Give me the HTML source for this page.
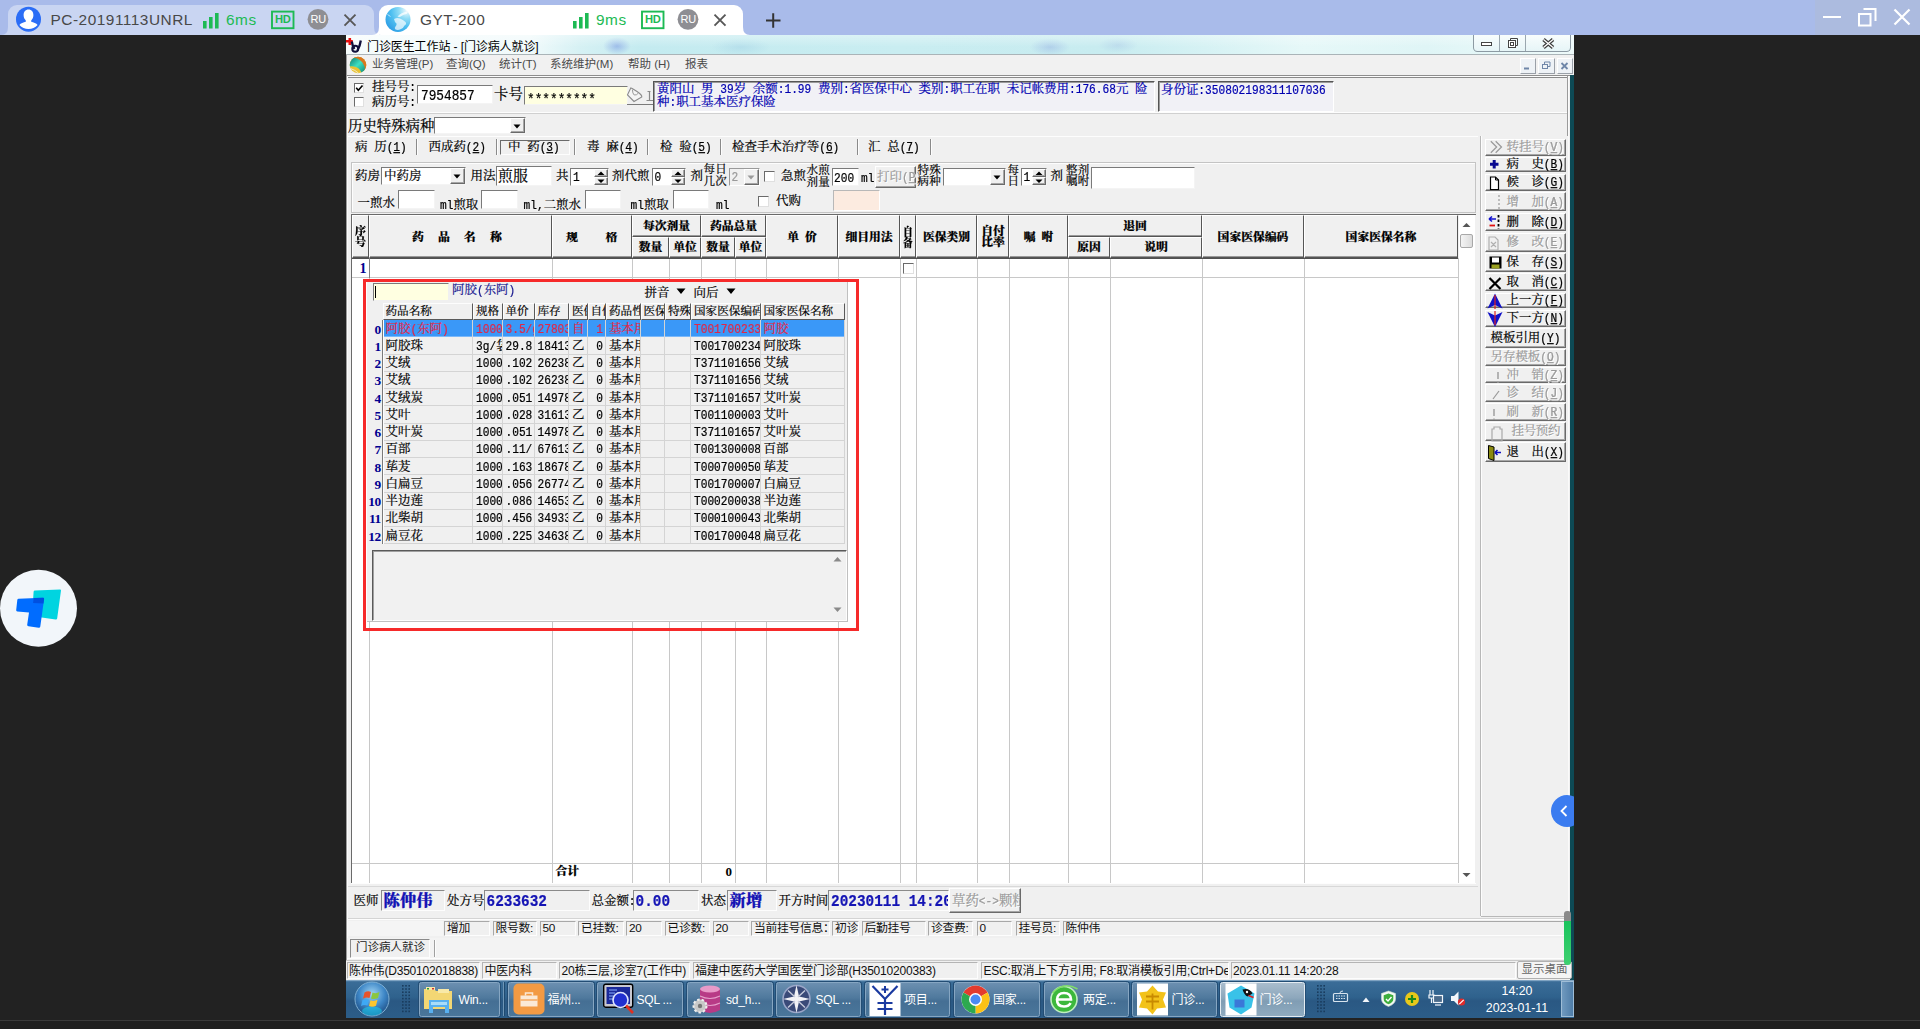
<!DOCTYPE html>
<html lang="zh-CN"><head><meta charset="utf-8"><title>GYT-200</title>
<style>
html,body{margin:0;padding:0;background:#222;}
body{width:1920px;height:1029px;overflow:hidden;position:relative;font-family:"Liberation Sans","Noto Sans CJK SC",sans-serif;}
.a{position:absolute;box-sizing:border-box;}
.t{white-space:nowrap;line-height:1;}
.s{font-family:"Liberation Serif","Noto Serif CJK SC",serif;font-size:11.5px;color:#000;font-weight:400;-webkit-text-stroke:0.2px currentColor;}
.s13{font-size:13.4px;}
.s15{font-size:14.4px;}
.s16{font-size:15.4px;}
.y{font-family:"Liberation Sans","Noto Sans CJK SC",sans-serif;font-size:11.5px;color:#222;}
.b{font-weight:900;}
.b .m{font-weight:bold;}
.blue{color:#0000b0;}
.gray{color:#9a9a9a;}
.sunk{border:1px solid;border-color:#7a7a7a #f4f4f4 #f4f4f4 #7a7a7a;background:#fff;}
.sunk2{border:1px solid;border-color:#9a9a9a #fff #fff #9a9a9a;background:#f0f0f0;}
.btn{border:1px solid;border-color:#fff #6a6a6a #6a6a6a #fff;background:#f0f0f0;box-shadow:inset -1px -1px 0 #a6a6a6;}
.hd{background:#f0f0f0;border:1px solid;border-color:#fff #555 #555 #fff;box-shadow:inset 0 -1px 0 #999;}
.c{text-align:center;}
.m{font-family:"Liberation Mono",monospace;font-size:.8333em;display:inline-block;transform:scaleY(1.2);transform-origin:0 77%;white-space:pre;}
u .m{text-decoration:underline;}
.f13 .m{font-size:.8975em;}
.f15 .m{font-size:.888em;}
.f18 .m{font-size:.877em;}
</style></head>
<body>
<div class="a " style="left:0px;top:0px;width:1920px;height:35px;background:#a9bbea"></div>
<div class="a " style="left:1815px;top:0px;width:105px;height:35px;background:#acbbdf"></div>
<div class="a " style="left:8px;top:5px;width:366px;height:30px;background:#c9d5f2;border-radius:9px 9px 0 0"></div>
<div class="a " style="left:379px;top:5px;width:364px;height:30px;background:#fff;border-radius:9px 9px 0 0"></div>
<svg class="a" style="left:0;top:0" width="1920" height="35" viewBox="0 0 1920 35"><path d="M1 35 Q8 35 8 27 L8 35 Z M381 35 Q374 35 374 27 L374 35 Z" fill="#c9d5f2"/><path d="M372 35 Q379 35 379 27 L379 35 Z M750 35 Q743 35 743 27 L743 35 Z" fill="#fff"/><circle cx="28.5" cy="19.2" r="12.5" fill="#2b6df6"/><path d="M28.5 9.5c3.1 0 4.9 2.4 4.9 5.6 0 2.3-.9 4.3-2.2 5.3v1.3c2.2.5 5.2 1.6 6.4 3.2a12.3 12.3 0 0 1-18.2 0c1.2-1.6 4.2-2.7 6.4-3.2v-1.3c-1.3-1-2.2-3-2.2-5.3 0-3.2 1.8-5.6 4.9-5.6z" fill="#fff"/><rect x="203" y="21" width="3.6" height="7.5" fill="#1dba54"/><rect x="209" y="17" width="3.6" height="11.5" fill="#1dba54"/><rect x="215" y="13" width="3.6" height="15.5" fill="#1dba54"/><rect x="272" y="11.6" width="21.5" height="16.6" fill="none" stroke="#1dba54" stroke-width="1.9"/><circle cx="318" cy="19.3" r="10.4" fill="#8e8e93"/><path d="M344.5 14.6 L355.5 25.6 M355.5 14.6 L344.5 25.6" stroke="#585858" stroke-width="1.9" fill="none"/><defs><radialGradient id="gl" cx="0.85" cy="0.15" r="1.05"><stop offset="0" stop-color="#eef9fd"/><stop offset="0.3" stop-color="#8fdcf6"/><stop offset="0.6" stop-color="#4ebff0"/><stop offset="1" stop-color="#2a9ae4"/></radialGradient></defs><circle cx="398" cy="19.5" r="12.5" fill="url(#gl)"/><path d="M397.5 16.5q3.5-4 9.5-5q1.5 1-0.5 2.5q-3 .5-5 2q-2 1.5-4 .5z" fill="#fff" opacity="0.75"/><path d="M394 19q3-1.5 6-.5q3 1 5.5 3.5q1.5 2-1 3.5q-1 2.5-3.5 3.5q-3 1.5-5.5 .5q-1.5-1.5 0-3q1.5-1.5 1-3q-2-1.5-2.5-4.5z" fill="#fff" opacity="0.7"/><path d="M387.5 14.5l3 2" stroke="#fff" stroke-width=".8" opacity=".8"/><rect x="573" y="21" width="3.6" height="7.5" fill="#1dba54"/><rect x="579" y="17" width="3.6" height="11.5" fill="#1dba54"/><rect x="585" y="13" width="3.6" height="15.5" fill="#1dba54"/><rect x="642" y="11.6" width="21.5" height="16.6" fill="none" stroke="#1dba54" stroke-width="1.9"/><circle cx="688" cy="19.3" r="10.4" fill="#8e8e93"/><path d="M714.5 14.6 L725.5 25.6 M725.5 14.6 L714.5 25.6" stroke="#585858" stroke-width="1.9" fill="none"/><path d="M766 20.5 H780.5 M773.2 13.2 V27.8" stroke="#333" stroke-width="2" fill="none"/><path d="M1823 17 H1841" stroke="#fff" stroke-width="2"/><rect x="1859" y="14" width="11.5" height="11.5" fill="none" stroke="#fff" stroke-width="2"/><path d="M1863.5 9 H1875.5 V21" fill="none" stroke="#fff" stroke-width="2"/><path d="M1894.5 9.5 L1909.5 24.5 M1909.5 9.5 L1894.5 24.5" stroke="#fff" stroke-width="2.2" fill="none"/></svg>
<span class="a t y" style="left:50.5px;top:12.4px;font-size:15.4px;color:#484848;letter-spacing:0.52px">PC-20191113UNRL</span>
<span class="a t y" style="left:226px;top:12.4px;font-size:15.4px;color:#1dba54;letter-spacing:0.5px">6ms</span>
<span class="a t y b" style="left:275px;top:14.2px;font-size:11.2px;color:#1dba54;letter-spacing:-0.3px">HD</span>
<span class="a t y" style="left:310.6px;top:14px;font-size:11px;color:#fff;letter-spacing:-0.3px">RU</span>
<span class="a t y" style="left:420px;top:12.4px;font-size:15.4px;color:#484848;letter-spacing:0.52px">GYT-200</span>
<span class="a t y" style="left:596px;top:12.4px;font-size:15.4px;color:#1dba54;letter-spacing:0.5px">9ms</span>
<span class="a t y b" style="left:645px;top:14.2px;font-size:11.2px;color:#1dba54;letter-spacing:-0.3px">HD</span>
<span class="a t y" style="left:680.6px;top:14px;font-size:11px;color:#fff;letter-spacing:-0.3px">RU</span>
<svg class="a" style="left:0;top:565px" width="84" height="88" viewBox="0 0 84 88"><circle cx="38.5" cy="43.3" r="38.5" fill="#f2f6fa"/><path d="M35 25.5 L60 24.4 Q61.2 24.4 61 25.6 L57.2 53.3 Q57 54.7 55.6 54.5 L33 51.2 Q32 51 32.1 50 L33.6 26.8 Q33.7 25.6 35 25.5 Z" fill="#00d4e0"/><path d="M18.5 33.7 L43 32.7 Q44.3 32.7 44.1 34 L40.3 61.5 Q40 63 38.7 62.8 L28.5 61.3 Q27 61 27.2 59.7 L29 47.5 L17.3 46.5 Q16 46.3 16.2 45 L17.3 35 Q17.5 33.7 18.5 33.7 Z" fill="#006cff"/><path d="M33.7 33.1 L43 32.7 Q44.3 32.7 44.1 34 L43.5 38.5 L33.1 38 Z" fill="#0050e0"/></svg>
<div class="a " style="left:1551px;top:795px;width:23px;height:32px;overflow:hidden;z-index:50"><div class="a" style="left:0;top:0;width:32px;height:32px;border-radius:16px;background:#3b7cf0"></div><svg class="a" style="left:8px;top:9px" width="10" height="14" viewBox="0 0 10 14"><path d="M7.5 2 L2.5 7 L7.5 12" stroke="#fff" stroke-width="1.8" fill="none"/></svg></div>
<div class="a " style="left:1564px;top:911px;width:7px;height:12px;background:#8a8a8a;border-radius:3px 3px 0 0;z-index:50"></div>
<div class="a " style="left:1564px;top:921px;width:7px;height:44px;background:linear-gradient(#19c35c,#3fd070);border-radius:0 0 3px 3px;z-index:50"></div>
<div class="a " style="left:346px;top:35px;width:1228px;height:983px;background:#f0f0f0"></div>
<div class="a " style="left:346px;top:35px;width:1228px;height:20px;background:radial-gradient(14px 9px at 271px 11px,rgba(110,140,225,.5),rgba(110,140,225,0)),radial-gradient(20px 9px at 704px 12px,rgba(140,165,225,.4),rgba(140,165,225,0)),radial-gradient(20px 8px at 772px 10px,rgba(150,180,225,.3),rgba(150,180,225,0)),radial-gradient(30px 9px at 395px 12px,rgba(150,200,225,.35),rgba(150,200,225,0)),linear-gradient(90deg,#f6fcfc 0,#f1fafb 15%,#d6f1f4 19%,#c4ebf0 24%,#c9edf1 45%,#c8ecf0 62%,#d6f2f4 70%,#e6f8f8 78%,#dff5f6 88%,#eefafa 100%);"></div>
<div class="a " style="left:346px;top:35px;width:1228px;height:20px;background:linear-gradient(180deg,rgba(255,255,255,.35),rgba(255,255,255,0) 60%);"></div>
<div class="a " style="left:346px;top:54px;width:1228px;height:1px;background:#aab4b8"></div>
<svg class="a" style="left:346px;top:36px" width="18" height="18" viewBox="0 0 18 18"><path d="M0 5.3 H6.8 M3.8 2 V9" stroke="#e81010" stroke-width="2.6"/><path d="M5.8 5.5 Q6.5 10.5 8.5 13 M14.8 4.5 Q14 10 11.5 14.5" stroke="#10103a" stroke-width="2.3" fill="none"/><circle cx="9.2" cy="12.7" r="3" fill="none" stroke="#10103a" stroke-width="1.9"/></svg>
<span class="a t y" style="left:367px;top:40.5px;font-size:12px;color:#000;letter-spacing:-0.1px">门诊医生工作站 - [门诊病人就诊]</span>
<div class="a " style="left:1472.5px;top:35px;width:98.5px;height:17px;background:linear-gradient(#f8fdfd,#e6f5f7);border:1px solid #8c9aa3;border-top:none;border-radius:0 0 4.5px 4.5px"></div>
<div class="a " style="left:1499px;top:35px;width:1px;height:16px;background:#9aa7af"></div>
<div class="a " style="left:1525px;top:35px;width:1px;height:16px;background:#9aa7af"></div>
<svg class="a" style="left:1472px;top:35px" width="95" height="17" viewBox="0 0 95 17"><rect x="9.5" y="7.5" width="10" height="3" fill="#fff" stroke="#444" stroke-width="1"/><rect x="36.5" y="5.5" width="7" height="7" fill="#fff" stroke="#444" stroke-width="1"/><rect x="38.5" y="7.5" width="3" height="3" fill="#fff" stroke="#444"/><path d="M38.5 5 V3.5 H45.5 V10.5 H44" fill="none" stroke="#444"/><path d="M71.5 4.5 L81 12.5 M81 4.5 L71.5 12.5" stroke="#3c3c3c" stroke-width="3.6"/><path d="M71.5 4.5 L81 12.5 M81 4.5 L71.5 12.5" stroke="#fff" stroke-width="1.3"/></svg>
<div class="a " style="left:346px;top:55px;width:1228px;height:20px;background:#f1f1f1"></div>
<div class="a " style="left:346px;top:75px;width:1224px;height:1px;background:#8e8e8e"></div>
<div class="a " style="left:346px;top:76px;width:1224px;height:1px;background:#fdfdfd"></div>
<svg class="a" style="left:349px;top:56.3px" width="18" height="18" viewBox="0 0 18 18"><defs><linearGradient id="tl" x1="0" y1="0" x2="1" y2="1"><stop offset="0" stop-color="#0c7a70"/><stop offset=".5" stop-color="#3fe0c0"/><stop offset="1" stop-color="#0c8478"/></linearGradient><clipPath id="mc"><circle cx="9" cy="9" r="8.3"/></clipPath></defs><g clip-path="url(#mc)"><rect width="18" height="18" fill="#e8c234"/><path d="M0 0 H18 V18 Z" fill="#d8761e"/><path d="M1.5 12.5 Q6 14 9.5 17" stroke="#f6ecc0" stroke-width="1" fill="none"/><path d="M0 5.5 Q2 2 5 1.8 Q10 2.5 13.5 6.5 Q16.5 10.5 15.8 14.5 L12.8 17.5 Q11.5 13 7.5 11.2 Q3.5 9.5 0 10.5 Z" fill="url(#tl)"/></g></svg>
<span class="a t y" style="left:372px;top:59px;font-size:11.5px;color:#4a4a4a;">业务管理(P)</span>
<span class="a t y" style="left:446px;top:59px;font-size:11.5px;color:#4a4a4a;">查询(Q)</span>
<span class="a t y" style="left:499px;top:59px;font-size:11.5px;color:#4a4a4a;">统计(T)</span>
<span class="a t y" style="left:550px;top:59px;font-size:11.5px;color:#4a4a4a;">系统维护(M)</span>
<span class="a t y" style="left:628px;top:59px;font-size:11.5px;color:#4a4a4a;">帮助 (H)</span>
<span class="a t y" style="left:685px;top:59px;font-size:11.5px;color:#4a4a4a;">报表</span>
<div class="a " style="left:1519.5px;top:57.5px;width:16.5px;height:16px;background:#eef2f6;border:1px solid;border-color:#fff #9aa0a8 #9aa0a8 #fff"></div>
<div class="a " style="left:1538px;top:57.5px;width:16.5px;height:16px;background:#eef2f6;border:1px solid;border-color:#fff #9aa0a8 #9aa0a8 #fff"></div>
<div class="a " style="left:1556.5px;top:57.5px;width:16.5px;height:16px;background:#eef2f6;border:1px solid;border-color:#fff #9aa0a8 #9aa0a8 #fff"></div>
<svg class="a" style="left:1519px;top:58px" width="54" height="16" viewBox="0 0 54 16"><path d="M5 10.5 H10" stroke="#6f86a8" stroke-width="2"/><rect x="23.5" y="6.5" width="5" height="4" fill="none" stroke="#6f86a8"/><path d="M25.5 6 V4 H31 V8.5 H29" fill="none" stroke="#6f86a8"/><path d="M42.5 5 L48.5 11 M48.5 5 L42.5 11" stroke="#6f86a8" stroke-width="1.8"/></svg>
<div class="a " style="left:1569.5px;top:75px;width:4.5px;height:905px;background:#0e4a55"></div>
<div class="a " style="left:1568px;top:76px;width:1px;height:904px;background:#fafafa"></div>
<div class="a " style="left:1567px;top:76px;width:1px;height:904px;background:#9a9a9a"></div>
<div class="a " style="left:346px;top:55px;width:1px;height:925px;background:#9c9c9c"></div>
<div class="a " style="left:347px;top:76px;width:1px;height:904px;background:#fafafa"></div>
<div class="a " style="left:348px;top:77px;width:1219px;height:1px;background:#8a8a8a"></div>
<div class="a " style="left:348px;top:112px;width:1219px;height:1px;background:#fdfdfd"></div>
<div class="a " style="left:348px;top:113px;width:1219px;height:1px;background:#d0d0d0"></div>
<div class="a " style="left:354px;top:82.5px;width:10px;height:10px;background:#fff;border:1px solid;border-color:#6a6a6a #e0e0e0 #e0e0e0 #6a6a6a"></div>
<svg class="a" style="left:355px;top:83.5px" width="9" height="9" viewBox="0 0 9 9"><path d="M1.2 3.8 L3.3 6.2 L7.5 1.5" stroke="#000" stroke-width="1.6" fill="none"/></svg>
<div class="a " style="left:354px;top:97px;width:10px;height:10px;background:#fff;border:1px solid;border-color:#6a6a6a #e0e0e0 #e0e0e0 #6a6a6a"></div>
<span class="a t s f13" style="left:372px;top:81px;font-size:12.460px">挂号号<span class="m">:</span></span>
<span class="a t s f13" style="left:372px;top:95.5px;font-size:12.460px">病历号<span class="m">:</span></span>
<div class="a sunk" style="left:417px;top:85px;width:76px;height:19px;"></div>
<span class="a t s f15" style="left:421px;top:88px;font-size:14.4px"><span class="m">7954857</span></span>
<span class="a t s f15" style="left:494px;top:87px;font-size:14.4px">卡号</span>
<div class="a sunk" style="left:524px;top:86px;width:104px;height:19px;background:#ffffe1"></div>
<span class="a t s f15" style="left:527px;top:91.5px;font-size:14.4px;"><span class="m">*********</span></span>
<div class="a " style="left:627px;top:86px;width:26px;height:19px;border-bottom:1px solid #7a7a7a;"></div>
<svg class="a" style="left:626px;top:87px" width="27" height="17" viewBox="0 0 27 17"><path d="M4.8 1 L1.5 7.8 L8 14.5 L15.8 10 Q16.2 8 11 4.5 L6.2 1.5 Z" fill="#f4f4f4" stroke="#8a8a8a" stroke-width="1.1"/><path d="M6.4 2.6 Q6.5 6.5 8.2 8 Q10.5 8.5 12.5 6" fill="none" stroke="#9a9a9a" stroke-width="1"/><path d="M23.5 4.5 V13.5 M20.5 13.5 H27 M21.5 4.5 H24.5" stroke="#8a8a8a" stroke-width="1.2"/></svg>
<div class="a " style="left:652.5px;top:80.5px;width:502.5px;height:31.5px;background:#f1f1f6;border:1px solid;border-color:#555 #fff #fff #555;box-shadow:inset 1px 1px 0 #9a9a9a"></div>
<span class="a t s blue f13" style="left:657px;top:83.2px;font-size:12.460px;">黄阳山<span class="m"> </span>男<span class="m"> 39</span>岁<span class="m"> </span>余额<span class="m">:1.99 </span>费别<span class="m">:</span>省医保中心<span class="m"> </span>类别<span class="m">:</span>职工在职<span class="m"> </span>未记帐费用<span class="m">:176.68</span>元<span class="m"> </span>险</span>
<span class="a t s blue f13" style="left:657px;top:96px;font-size:12.460px;">种<span class="m">:</span>职工基本医疗保险</span>
<div class="a " style="left:1158px;top:80.5px;width:176px;height:31.5px;background:#f1f1f6;border:1px solid;border-color:#555 #fff #fff #555;box-shadow:inset 1px 1px 0 #9a9a9a"></div>
<span class="a t s blue f13" style="left:1161px;top:83.5px;font-size:12.460px;">身份证<span class="m">:350802198311107036</span></span>
<span class="a t s f15" style="left:348px;top:118.5px;font-size:14.4px">历史特殊病种</span>
<div class="a sunk" style="left:434px;top:117px;width:92px;height:17px;"></div>
<div class="a btn" style="left:510px;top:118px;width:15px;height:15px;"></div>
<svg class="a" style="left:513px;top:123.5px" width="8" height="5" viewBox="0 0 8 5"><path d="M0.5 0.5 H7.5 L4 4.5 Z" fill="#000"/></svg>
<div class="a " style="left:348px;top:136px;width:1130px;height:1px;background:#fdfdfd"></div>
<span class="a t s f13" style="left:355px;top:140.5px;font-size:12.460px">病<span class="m"> </span>历<span class="m">(</span><u><span class="m">1</span></u><span class="m">)</span></span>
<span class="a t s f13" style="left:428.5px;top:140.5px;font-size:12.460px">西成药<span class="m">(</span><u><span class="m">2</span></u><span class="m">)</span></span>
<span class="a t s f13" style="left:508px;top:140.5px;font-size:12.460px">中<span class="m"> </span>药<span class="m">(</span><u><span class="m">3</span></u><span class="m">)</span></span>
<span class="a t s f13" style="left:587px;top:140.5px;font-size:12.460px">毒<span class="m"> </span>麻<span class="m">(</span><u><span class="m">4</span></u><span class="m">)</span></span>
<span class="a t s f13" style="left:660px;top:140.5px;font-size:12.460px">检<span class="m"> </span>验<span class="m">(</span><u><span class="m">5</span></u><span class="m">)</span></span>
<span class="a t s f13" style="left:732px;top:140.5px;font-size:12.460px">检查手术治疗等<span class="m">(</span><u><span class="m">6</span></u><span class="m">)</span></span>
<span class="a t s f13" style="left:868px;top:140.5px;font-size:12.460px">汇<span class="m"> </span>总<span class="m">(</span><u><span class="m">7</span></u><span class="m">)</span></span>
<div class="a " style="left:416px;top:139px;width:1px;height:16px;background:#8a8a8a"></div>
<div class="a " style="left:417px;top:139px;width:1px;height:16px;background:#fdfdfd"></div>
<div class="a " style="left:496px;top:139px;width:1px;height:16px;background:#8a8a8a"></div>
<div class="a " style="left:497px;top:139px;width:1px;height:16px;background:#fdfdfd"></div>
<div class="a " style="left:574px;top:139px;width:1px;height:16px;background:#8a8a8a"></div>
<div class="a " style="left:575px;top:139px;width:1px;height:16px;background:#fdfdfd"></div>
<div class="a " style="left:647px;top:139px;width:1px;height:16px;background:#8a8a8a"></div>
<div class="a " style="left:648px;top:139px;width:1px;height:16px;background:#fdfdfd"></div>
<div class="a " style="left:720px;top:139px;width:1px;height:16px;background:#8a8a8a"></div>
<div class="a " style="left:721px;top:139px;width:1px;height:16px;background:#fdfdfd"></div>
<div class="a " style="left:857px;top:139px;width:1px;height:16px;background:#8a8a8a"></div>
<div class="a " style="left:858px;top:139px;width:1px;height:16px;background:#fdfdfd"></div>
<div class="a " style="left:930px;top:139px;width:1px;height:16px;background:#8a8a8a"></div>
<div class="a " style="left:931px;top:139px;width:1px;height:16px;background:#fdfdfd"></div>
<div class="a " style="left:500px;top:139.5px;width:70px;height:15px;border:1px solid;border-color:#6a6a6a #fdfdfd #fdfdfd #6a6a6a;"></div>
<div class="a " style="left:351px;top:162px;width:1125px;height:51px;border:1px solid;border-color:#c4c4c4 #c4c4c4 #c4c4c4 #c4c4c4;box-shadow:inset 1px 1px 0 #fdfdfd"></div>
<span class="a t s f13" style="left:355px;top:169.5px;font-size:12.460px">药房</span>
<div class="a sunk" style="left:381px;top:167px;width:85px;height:18px;"></div>
<div class="a btn" style="left:450px;top:168px;width:15px;height:16px;"></div>
<svg class="a" style="left:453px;top:174.0px" width="8" height="5" viewBox="0 0 8 5"><path d="M0.5 0.5 H7.5 L4 4.5 Z" fill="#000"/></svg>
<span class="a t s f13" style="left:384px;top:170.0px;font-size:12.460px">中药房</span>
<span class="a t s f13" style="left:470.5px;top:169.5px;font-size:12.460px">用法</span>
<div class="a sunk" style="left:495.5px;top:166px;width:56px;height:20px;"></div>
<span class="a t s" style="left:498px;top:168.8px;font-size:14.9px">煎服</span>
<span class="a t s f13" style="left:556px;top:169.5px;font-size:12.460px">共</span>
<div class="a sunk" style="left:570px;top:167.5px;width:38.5px;height:18.5px;"></div>
<div class="a btn" style="left:593.5px;top:168.5px;width:14px;height:8.25px;"></div>
<div class="a btn" style="left:593.5px;top:176.75px;width:14px;height:8.25px;"></div>
<svg class="a" style="left:596.5px;top:170.5px" width="8" height="12.5" viewBox="0 0 8 12.5"><path d="M0.5 4 H7.5 L4 0.5 Z M0.5 8.5 H7.5 L4 12.0 Z" fill="#000"/></svg>
<span class="a t s f13" style="left:573px;top:170.75px;font-size:12.460px"><span class="m">1</span></span>
<span class="a t s f13" style="left:612px;top:169.5px;font-size:12.460px">剂代煎</span>
<div class="a sunk" style="left:651.5px;top:167.5px;width:34.5px;height:18.5px;"></div>
<div class="a btn" style="left:671.0px;top:168.5px;width:14px;height:8.25px;"></div>
<div class="a btn" style="left:671.0px;top:176.75px;width:14px;height:8.25px;"></div>
<svg class="a" style="left:674.0px;top:170.5px" width="8" height="12.5" viewBox="0 0 8 12.5"><path d="M0.5 4 H7.5 L4 0.5 Z M0.5 8.5 H7.5 L4 12.0 Z" fill="#000"/></svg>
<span class="a t s f13" style="left:654.5px;top:170.75px;font-size:12.460px"><span class="m">0</span></span>
<span class="a t s f13" style="left:690.5px;top:169.5px;font-size:12.460px">剂</span>
<span class="a t s" style="left:703.5px;top:164px;font-size:11.5px;letter-spacing:0.3px">每日</span>
<span class="a t s" style="left:703.5px;top:175.8px;font-size:11.5px;letter-spacing:0.3px">几次</span>
<div class="a sunk2" style="left:728.5px;top:168px;width:31.5px;height:18px;"></div>
<div class="a btn" style="left:744.0px;top:169px;width:15px;height:16px;"></div>
<svg class="a" style="left:747.0px;top:175.0px" width="8" height="5" viewBox="0 0 8 5"><path d="M0.5 0.5 H7.5 L4 4.5 Z" fill="#9a9a9a"/></svg>
<span class="a t s gray f13" style="left:731.5px;top:171.0px;font-size:12.460px"><span class="m">2</span></span>
<div class="a " style="left:764px;top:170.5px;width:11px;height:11px;background:#fff;border:1px solid;border-color:#6a6a6a #e0e0e0 #e0e0e0 #6a6a6a"></div>
<span class="a t s f13" style="left:781px;top:169.5px;font-size:12.460px">急煎</span>
<span class="a t s" style="left:806.5px;top:165px;font-size:11.5px;letter-spacing:0.3px">水煎</span>
<span class="a t s" style="left:806.5px;top:176.8px;font-size:11.5px;letter-spacing:0.3px">剂量</span>
<div class="a sunk" style="left:831.5px;top:167.5px;width:27.5px;height:18.5px;"></div>
<span class="a t s" style="left:834px;top:171px;font-size:13.4px"><span class="m">200</span></span>
<span class="a t s" style="left:861px;top:171px;font-size:13.4px"><span class="m">ml</span></span>
<div class="a btn" style="left:875px;top:166px;width:41px;height:22px;"></div>
<span class="a t s gray f13" style="left:877px;top:170.5px;font-size:12.460px;text-shadow:1px 1px 0 #fff">打印<span class="m">(</span><u><span class="m">P</span></u><span class="m">)</span></span>
<span class="a t s" style="left:917.5px;top:164.5px;font-size:11.5px;letter-spacing:0.3px">特殊</span>
<span class="a t s" style="left:917.5px;top:176.3px;font-size:11.5px;letter-spacing:0.3px">病种</span>
<div class="a sunk" style="left:942.5px;top:168px;width:63px;height:18px;"></div>
<div class="a btn" style="left:989.5px;top:169px;width:15px;height:16px;"></div>
<svg class="a" style="left:992.5px;top:175.0px" width="8" height="5" viewBox="0 0 8 5"><path d="M0.5 0.5 H7.5 L4 4.5 Z" fill="#000"/></svg>
<span class="a t s" style="left:1007.5px;top:164.5px;font-size:11.5px;letter-spacing:0.3px">每</span>
<span class="a t s" style="left:1007.5px;top:176.3px;font-size:11.5px;letter-spacing:0.3px">日</span>
<div class="a sunk" style="left:1020.5px;top:167.5px;width:26.5px;height:18.5px;"></div>
<div class="a btn" style="left:1032.0px;top:168.5px;width:14px;height:8.25px;"></div>
<div class="a btn" style="left:1032.0px;top:176.75px;width:14px;height:8.25px;"></div>
<svg class="a" style="left:1035.0px;top:170.5px" width="8" height="12.5" viewBox="0 0 8 12.5"><path d="M0.5 4 H7.5 L4 0.5 Z M0.5 8.5 H7.5 L4 12.0 Z" fill="#000"/></svg>
<span class="a t s f13" style="left:1023.5px;top:170.75px;font-size:12.460px"><span class="m">1</span></span>
<span class="a t s f13" style="left:1050.5px;top:169.5px;font-size:12.460px">剂</span>
<span class="a t s" style="left:1066px;top:164.5px;font-size:11.5px;letter-spacing:0.3px">整剂</span>
<span class="a t s" style="left:1066px;top:176.3px;font-size:11.5px;letter-spacing:0.3px">嘱咐</span>
<div class="a sunk" style="left:1091px;top:166.5px;width:103.5px;height:22px;"></div>
<span class="a t s f13" style="left:357.5px;top:197.2px;font-size:12.460px">一煎水</span>
<div class="a sunk" style="left:398px;top:190px;width:36.5px;height:19px;"></div>
<span class="a t s f13" style="left:440px;top:198.6px;font-size:12.460px"><span class="m">ml</span>煎取</span>
<div class="a sunk" style="left:480.5px;top:190px;width:37px;height:19px;"></div>
<span class="a t s f13" style="left:523.5px;top:198.6px;font-size:12.460px"><span class="m">ml,</span>二煎水</span>
<div class="a sunk" style="left:584.5px;top:190px;width:36.5px;height:19px;"></div>
<span class="a t s f13" style="left:630.5px;top:198.6px;font-size:12.460px"><span class="m">ml</span>煎取</span>
<div class="a sunk" style="left:672.5px;top:190px;width:36.5px;height:19px;"></div>
<span class="a t s f13" style="left:716px;top:198.6px;font-size:12.460px"><span class="m">ml</span></span>
<div class="a " style="left:758px;top:195.5px;width:11px;height:11px;background:#fff;border:1px solid;border-color:#6a6a6a #e0e0e0 #e0e0e0 #6a6a6a"></div>
<span class="a t s f13" style="left:776px;top:195px;font-size:12.460px">代购</span>
<div class="a " style="left:833px;top:189.5px;width:47px;height:21px;background:#fcebe0;border:1px solid;border-color:#b8b8b8 #fff #fff #b8b8b8"></div>
<div class="a " style="left:352px;top:258px;width:1123px;height:625px;background:#fff"></div>
<div class="a " style="left:352px;top:215px;width:1106px;height:43px;background:#f0f0f0"></div>
<div class="a " style="left:369px;top:258px;width:1px;height:625px;background:#c8c8c8"></div>
<div class="a " style="left:552px;top:258px;width:1px;height:625px;background:#c8c8c8"></div>
<div class="a " style="left:632px;top:258px;width:1px;height:625px;background:#c8c8c8"></div>
<div class="a " style="left:701px;top:258px;width:1px;height:625px;background:#c8c8c8"></div>
<div class="a " style="left:766px;top:258px;width:1px;height:625px;background:#c8c8c8"></div>
<div class="a " style="left:838px;top:258px;width:1px;height:625px;background:#c8c8c8"></div>
<div class="a " style="left:900px;top:258px;width:1px;height:625px;background:#c8c8c8"></div>
<div class="a " style="left:916px;top:258px;width:1px;height:625px;background:#c8c8c8"></div>
<div class="a " style="left:977px;top:258px;width:1px;height:625px;background:#c8c8c8"></div>
<div class="a " style="left:1009px;top:258px;width:1px;height:625px;background:#c8c8c8"></div>
<div class="a " style="left:1068px;top:258px;width:1px;height:625px;background:#c8c8c8"></div>
<div class="a " style="left:1202px;top:258px;width:1px;height:625px;background:#c8c8c8"></div>
<div class="a " style="left:1304px;top:258px;width:1px;height:625px;background:#c8c8c8"></div>
<div class="a " style="left:669px;top:258px;width:1px;height:625px;background:#c8c8c8"></div>
<div class="a " style="left:735px;top:258px;width:1px;height:625px;background:#c8c8c8"></div>
<div class="a " style="left:1110px;top:258px;width:1px;height:625px;background:#c8c8c8"></div>
<div class="a " style="left:1458px;top:258px;width:1px;height:625px;background:#c8c8c8"></div>
<div class="a " style="left:352px;top:277px;width:1106px;height:1px;background:#c8c8c8"></div>
<div class="a " style="left:352px;top:863px;width:1106px;height:1px;background:#c8c8c8"></div>
<div class="a hd" style="left:352px;top:215px;width:17px;height:43px;"></div>
<div class="a t s b c" style="left:352px;top:225.5px;width:17px;font-size:11.5px;line-height:11px;transform:scaleX(.95)">序<br>号</div>
<div class="a hd" style="left:369px;top:215px;width:183px;height:43px;"></div>
<div class="a t s b c" style="left:369px;top:231.5px;width:183px;font-size:11.8px;letter-spacing:14.2px;text-indent:7px;">药品名称</div>
<div class="a hd" style="left:552px;top:215px;width:80px;height:43px;"></div>
<div class="a t s b c" style="left:552px;top:231.5px;width:80px;font-size:11.8px;letter-spacing:27.8px;text-indent:14px;text-align:left;overflow:hidden;">规格</div>
<div class="a hd" style="left:632px;top:215px;width:69px;height:22px;"></div>
<div class="a t s b c" style="left:632px;top:221.0px;width:69px;font-size:11.8px;">每次剂量</div>
<div class="a hd" style="left:632px;top:237px;width:37px;height:21px;"></div>
<div class="a t s b c" style="left:632px;top:241.5px;width:37px;font-size:11.8px;">数量</div>
<div class="a hd" style="left:669px;top:237px;width:32px;height:21px;"></div>
<div class="a t s b c" style="left:669px;top:241.5px;width:32px;font-size:11.8px;">单位</div>
<div class="a hd" style="left:701px;top:215px;width:65px;height:22px;"></div>
<div class="a t s b c" style="left:701px;top:221.0px;width:65px;font-size:11.8px;">药品总量</div>
<div class="a hd" style="left:701px;top:237px;width:34px;height:21px;"></div>
<div class="a t s b c" style="left:701px;top:241.5px;width:34px;font-size:11.8px;">数量</div>
<div class="a hd" style="left:735px;top:237px;width:31px;height:21px;"></div>
<div class="a t s b c" style="left:735px;top:241.5px;width:31px;font-size:11.8px;">单位</div>
<div class="a hd" style="left:766px;top:215px;width:72px;height:43px;"></div>
<div class="a t s b c" style="left:766px;top:231.5px;width:72px;font-size:11.8px;">单&ensp;价</div>
<div class="a hd" style="left:838px;top:215px;width:62px;height:43px;"></div>
<div class="a t s b c" style="left:838px;top:231.5px;width:62px;font-size:11.8px;">细目用法</div>
<div class="a hd" style="left:900px;top:215px;width:16px;height:43px;"></div>
<div class="a t s b c" style="left:900px;top:226.5px;width:16px;font-size:11.5px;line-height:11px;transform:scaleX(.85)">自<br>备</div>
<div class="a hd" style="left:916px;top:215px;width:61px;height:43px;"></div>
<div class="a t s b c" style="left:916px;top:231.5px;width:61px;font-size:11.8px;">医保类别</div>
<div class="a hd" style="left:977px;top:215px;width:32px;height:43px;"></div>
<div class="a t s b c" style="left:977px;top:225.5px;width:32px;font-size:11.8px;line-height:11.5px;">自付<br>比率</div>
<div class="a hd" style="left:1009px;top:215px;width:59px;height:43px;"></div>
<div class="a t s b c" style="left:1009px;top:231.5px;width:59px;font-size:11.8px;">嘱&ensp;咐</div>
<div class="a hd" style="left:1068px;top:215px;width:134px;height:22px;"></div>
<div class="a t s b c" style="left:1068px;top:221.0px;width:134px;font-size:11.8px;">退回</div>
<div class="a hd" style="left:1068px;top:237px;width:42px;height:21px;"></div>
<div class="a t s b c" style="left:1068px;top:241.5px;width:42px;font-size:11.8px;">原因</div>
<div class="a hd" style="left:1110px;top:237px;width:92px;height:21px;"></div>
<div class="a t s b c" style="left:1110px;top:241.5px;width:92px;font-size:11.8px;">说明</div>
<div class="a hd" style="left:1202px;top:215px;width:102px;height:43px;"></div>
<div class="a t s b c" style="left:1202px;top:231.5px;width:102px;font-size:11.8px;">国家医保编码</div>
<div class="a hd" style="left:1304px;top:215px;width:154px;height:43px;"></div>
<div class="a t s b c" style="left:1304px;top:231.5px;width:154px;font-size:11.8px;">国家医保名称</div>
<div class="a " style="left:351px;top:214px;width:1125px;height:1px;background:#6a6a6a"></div>
<div class="a " style="left:351px;top:214px;width:1px;height:670px;background:#6a6a6a"></div>
<div class="a " style="left:351px;top:883px;width:1125px;height:1px;background:#fdfdfd"></div>
<div class="a " style="left:352px;top:257.5px;width:1106px;height:1px;background:#505050"></div>
<div class="a " style="left:369px;top:258px;width:1px;height:20px;background:#808080"></div>
<span class="a t" style="left:359.5px;top:261.5px;font-family:'Liberation Serif',serif;font-weight:bold;font-size:14px;color:#000090">1</span>
<div class="a " style="left:903px;top:263px;width:10.5px;height:10.5px;background:#fff;border:1px solid;border-color:#6a6a6a #e0e0e0 #e0e0e0 #6a6a6a"></div>
<span class="a t s b" style="left:555.5px;top:866px;font-size:11.8px">合计</span>
<span class="a t" style="left:725.5px;top:865px;font-family:'Liberation Serif',serif;font-weight:bold;font-size:13px;color:#000">0</span>
<div class="a " style="left:1459px;top:215px;width:16px;height:668px;background:#fff"></div>
<div class="a " style="left:1460px;top:234px;width:13px;height:14px;background:linear-gradient(90deg,#f4f4f4,#dcdcdc);border:1px solid #a8a8a8;border-radius:2px"></div>
<svg class="a" style="left:1462px;top:222px" width="9" height="6" viewBox="0 0 9 6"><path d="M0.5 5 L4.5 1 L8.5 5 Z" fill="#555"/></svg>
<svg class="a" style="left:1462px;top:872px" width="9" height="6" viewBox="0 0 9 6"><path d="M0.5 1 L4.5 5 L8.5 1 Z" fill="#555"/></svg>
<div class="a " style="left:1481px;top:136px;width:87px;height:780px;background:#f0f0f0;border-left:1px solid #fdfdfd;"></div>
<div class="a " style="left:1480px;top:136px;width:1px;height:780px;background:#b8b8b8"></div>
<div class="a " style="left:1481px;top:916px;width:87px;height:1px;background:#b8b8b8"></div>
<div class="a btn" style="left:1484.5px;top:138.5px;width:81.5px;height:17.0px;"></div>
<span class="a t s gray f13" style="left:1506.5px;top:140.75px;font-size:12.460px;text-shadow:1px 1px 0 #fff;">转挂号<span class="m">(</span><u><span class="m">V</span></u><span class="m">)</span></span>
<div class="a btn" style="left:1484.5px;top:156.8px;width:81.5px;height:15.399999999999977px;"></div>
<span class="a t s f13" style="left:1506.5px;top:158.25px;font-size:12.460px;">病　史<span class="m">(</span><u><span class="m">B</span></u><span class="m">)</span></span>
<div class="a btn" style="left:1484.5px;top:173.5px;width:81.5px;height:17.5px;"></div>
<span class="a t s f13" style="left:1506.5px;top:176.0px;font-size:12.460px;">候　诊<span class="m">(</span><u><span class="m">G</span></u><span class="m">)</span></span>
<div class="a btn" style="left:1484.5px;top:192.3px;width:81.5px;height:19.0px;"></div>
<span class="a t s gray f13" style="left:1506.5px;top:195.55px;font-size:12.460px;text-shadow:1px 1px 0 #fff;">增　加<span class="m">(</span><u><span class="m">A</span></u><span class="m">)</span></span>
<div class="a btn" style="left:1484.5px;top:212.60000000000002px;width:81.5px;height:18.69999999999999px;"></div>
<span class="a t s f13" style="left:1506.5px;top:215.70000000000002px;font-size:12.460px;">删　除<span class="m">(</span><u><span class="m">D</span></u><span class="m">)</span></span>
<div class="a btn" style="left:1484.5px;top:232.60000000000002px;width:81.5px;height:19.399999999999977px;"></div>
<span class="a t s gray f13" style="left:1506.5px;top:236.05px;font-size:12.460px;text-shadow:1px 1px 0 #fff;">修　改<span class="m">(</span><u><span class="m">E</span></u><span class="m">)</span></span>
<div class="a btn" style="left:1484.5px;top:253.3px;width:81.5px;height:18.69999999999999px;"></div>
<span class="a t s f13" style="left:1506.5px;top:256.4px;font-size:12.460px;">保　存<span class="m">(</span><u><span class="m">S</span></u><span class="m">)</span></span>
<div class="a btn" style="left:1484.5px;top:273.3px;width:81.5px;height:18.0px;"></div>
<span class="a t s f13" style="left:1506.5px;top:276.05px;font-size:12.460px;">取　消<span class="m">(</span><u><span class="m">C</span></u><span class="m">)</span></span>
<div class="a btn" style="left:1484.5px;top:292.6px;width:81.5px;height:15.799999999999955px;"></div>
<span class="a t s f13" style="left:1506.5px;top:294.25px;font-size:12.460px;">上一方<span class="m">(</span><u><span class="m">F</span></u><span class="m">)</span></span>
<div class="a btn" style="left:1484.5px;top:309.7px;width:81.5px;height:17.0px;"></div>
<span class="a t s f13" style="left:1506.5px;top:311.95px;font-size:12.460px;">下一方<span class="m">(</span><u><span class="m">N</span></u><span class="m">)</span></span>
<div class="a btn" style="left:1484.5px;top:328.0px;width:81.5px;height:19.69999999999999px;"></div>
<span class="a t s f13" style="left:1490.5px;top:331.6px;font-size:12.460px;">模板引用<span class="m">(</span><u><span class="m">Y</span></u><span class="m">)</span></span>
<div class="a btn" style="left:1484.5px;top:349.0px;width:81.5px;height:17.0px;"></div>
<span class="a t s gray f13" style="left:1490.5px;top:351.25px;font-size:12.460px;text-shadow:1px 1px 0 #fff;">另存模板<span class="m">(</span><u><span class="m">O</span></u><span class="m">)</span></span>
<div class="a btn" style="left:1484.5px;top:367.3px;width:81.5px;height:15.399999999999977px;"></div>
<span class="a t s gray f13" style="left:1506.5px;top:368.75px;font-size:12.460px;text-shadow:1px 1px 0 #fff;">冲　销<span class="m">(</span><u><span class="m">Z</span></u><span class="m">)</span></span>
<div class="a btn" style="left:1484.5px;top:384.0px;width:81.5px;height:18.0px;"></div>
<span class="a t s gray f13" style="left:1506.5px;top:386.75px;font-size:12.460px;text-shadow:1px 1px 0 #fff;">诊　结<span class="m">(</span><u><span class="m">J</span></u><span class="m">)</span></span>
<div class="a btn" style="left:1484.5px;top:403.3px;width:81.5px;height:17.69999999999999px;"></div>
<span class="a t s gray f13" style="left:1506.5px;top:405.9px;font-size:12.460px;text-shadow:1px 1px 0 #fff;">刷　新<span class="m">(</span><u><span class="m">R</span></u><span class="m">)</span></span>
<div class="a btn" style="left:1484.5px;top:422.3px;width:81.5px;height:18.399999999999977px;"></div>
<span class="a t s gray f13" style="left:1511.5px;top:425.25px;font-size:12.460px;text-shadow:1px 1px 0 #fff;letter-spacing:-0.3px;">挂号预约</span>
<div class="a btn" style="left:1484.5px;top:442.0px;width:81.5px;height:20.0px;"></div>
<span class="a t s f13" style="left:1506.5px;top:445.75px;font-size:12.460px;">退　出<span class="m">(</span><u><span class="m">X</span></u><span class="m">)</span></span>
<svg class="a" style="left:1485px;top:137px" width="22" height="330" viewBox="0 0 22 330"><path d="M6 4 L12 10 L6 16 M11 4 L17 10 L11 16" transform="translate(0,0.3) scale(.97)" stroke="#9a9a9a" stroke-width="1.3" fill="none"/><path d="M5 27.3 H13.5 M9.2 23 V31.5" stroke="#0a0a90" stroke-width="3"/><path d="M5.5 40 H10.5 L13.5 43 V52.5 H5.5 Z" fill="#fff" stroke="#000" stroke-width="1.2"/><path d="M10.5 40 V43 H13.5" fill="none" stroke="#000" stroke-width="1"/><path d="M14 58 V72" stroke="#aaa" stroke-width="1.5" stroke-dasharray="2 2"/><path d="M5 82 H11 M4 82 L7 79.5 M4 82 L7 84.5" stroke="#1010d0" stroke-width="1.6" fill="none"/><path d="M4.5 88.5 H10" stroke="#e01010" stroke-width="1.8"/><path d="M13.5 78 V92" stroke="#000" stroke-width="1.8" stroke-dasharray="2.5 2"/><path d="M4 100 H10 L13 103 V113 H4 Z M6 105 L11 110 M6 110 L11 105" fill="none" stroke="#b0b0b0" stroke-width="1.2"/><rect x="4.5" y="119.5" width="12" height="12" fill="#000"/><rect x="7" y="120.5" width="7" height="5" fill="#fff"/><rect x="6.5" y="127.5" width="8" height="4" fill="#9aa020"/><path d="M4.5 141 L15.5 152 M15.5 141 L4.5 152" stroke="#000" stroke-width="2.2"/><path d="M10 156.5 L17.5 171.5 L10 168 L2.5 171.5 Z" fill="#1010c8"/><path d="M10 158 V172" stroke="#e02020" stroke-width="1.2"/><path d="M10 190 L17.5 175 L10 178.5 L2.5 175 Z" fill="#1010c8"/><path d="M10 174 V188" stroke="#e02020" stroke-width="1.2"/><path d="M13 235 V242 M13 244.5 V246" stroke="#9a9a9a" stroke-width="1.4"/><path d="M8 262 L14 254" stroke="#9a9a9a" stroke-width="1.2"/><path d="M9 272 V279 M9 281.5 V283" stroke="#9a9a9a" stroke-width="1.4"/><path d="M7 292 H9 V290 H15 V292 H17 V304 H7 Z" fill="none" stroke="#aaa" stroke-width="1.2"/><g transform="translate(0,-2.5)"><path d="M3.5 311 L9 312.5 V326 L3.5 324 Z" fill="#8a8a10" stroke="#000" stroke-width="1"/><path d="M10 318 H16 M10 318 L12.5 315.5 M10 318 L12.5 320.5" stroke="#1010c0" stroke-width="1.6" fill="none"/></g></svg>
<div class="a " style="left:363px;top:279px;width:495.5px;height:352px;border:3px solid #f62a2a;"></div>
<div class="a " style="left:367px;top:282px;width:481px;height:340px;background:#f0f0f0;border-right:1px solid #c0c0c0;border-bottom:1px solid #c0c0c0"></div>
<div class="a " style="left:372.5px;top:282.5px;width:76.5px;height:18px;background:#ffffe1;border:1px solid;border-color:#7a7a7a #f0f0f0 #f0f0f0 #7a7a7a"></div>
<div class="a " style="left:375px;top:285.5px;width:1px;height:12px;background:#000"></div>
<span class="a t s f13" style="left:452px;top:283.5px;font-size:12.460px;color:#1a1a90;">阿胶<span class="m">(</span>东阿<span class="m">)</span></span>
<span class="a t s f13" style="left:644.5px;top:286.8px;font-size:12.460px">拼音</span>
<span class="a t s f13" style="left:693.5px;top:286.8px;font-size:12.460px">向后</span>
<svg class="a" style="left:676px;top:288px" width="62" height="7" viewBox="0 0 62 7"><path d="M0.5 0.5 H9.5 L5 6 Z M50.5 0.5 H59.5 L55 6 Z" fill="#000"/></svg>
<div class="a " style="left:370.5px;top:303px;width:474.5px;height:16.5px;background:#f0f0f0"></div>
<div class="a " style="left:382.5px;top:303px;width:90.5px;height:16.5px;overflow:hidden;border:1px solid;border-color:#fdfdfd #5a5a5a #5a5a5a #fdfdfd;background:#f0f0f0"><span class="a t s" style="left:2px;top:2px;font-size:11.6px">药品名称</span></div>
<div class="a " style="left:473px;top:303px;width:29.5px;height:16.5px;overflow:hidden;border:1px solid;border-color:#fdfdfd #5a5a5a #5a5a5a #fdfdfd;background:#f0f0f0"><span class="a t s" style="left:2px;top:2px;font-size:11.6px">规格</span></div>
<div class="a " style="left:502.5px;top:303px;width:32.0px;height:16.5px;overflow:hidden;border:1px solid;border-color:#fdfdfd #5a5a5a #5a5a5a #fdfdfd;background:#f0f0f0"><span class="a t s" style="left:2px;top:2px;font-size:11.6px">单价</span></div>
<div class="a " style="left:534.5px;top:303px;width:34.5px;height:16.5px;overflow:hidden;border:1px solid;border-color:#fdfdfd #5a5a5a #5a5a5a #fdfdfd;background:#f0f0f0"><span class="a t s" style="left:2px;top:2px;font-size:11.6px">库存</span></div>
<div class="a " style="left:569px;top:303px;width:18.5px;height:16.5px;overflow:hidden;border:1px solid;border-color:#fdfdfd #5a5a5a #5a5a5a #fdfdfd;background:#f0f0f0"><span class="a t s" style="left:2px;top:2px;font-size:11.6px">医保</span></div>
<div class="a " style="left:587.5px;top:303px;width:18.5px;height:16.5px;overflow:hidden;border:1px solid;border-color:#fdfdfd #5a5a5a #5a5a5a #fdfdfd;background:#f0f0f0"><span class="a t s" style="left:2px;top:2px;font-size:11.6px">自付</span></div>
<div class="a " style="left:606px;top:303px;width:34.5px;height:16.5px;overflow:hidden;border:1px solid;border-color:#fdfdfd #5a5a5a #5a5a5a #fdfdfd;background:#f0f0f0"><span class="a t s" style="left:2px;top:2px;font-size:11.6px">药品性</span></div>
<div class="a " style="left:640.5px;top:303px;width:24.5px;height:16.5px;overflow:hidden;border:1px solid;border-color:#fdfdfd #5a5a5a #5a5a5a #fdfdfd;background:#f0f0f0"><span class="a t s" style="left:2px;top:2px;font-size:11.6px">医保</span></div>
<div class="a " style="left:665px;top:303px;width:26px;height:16.5px;overflow:hidden;border:1px solid;border-color:#fdfdfd #5a5a5a #5a5a5a #fdfdfd;background:#f0f0f0"><span class="a t s" style="left:2px;top:2px;font-size:11.6px">特殊</span></div>
<div class="a " style="left:691px;top:303px;width:69.5px;height:16.5px;overflow:hidden;border:1px solid;border-color:#fdfdfd #5a5a5a #5a5a5a #fdfdfd;background:#f0f0f0"><span class="a t s" style="left:2px;top:2px;font-size:11.6px">国家医保编码</span></div>
<div class="a " style="left:760.5px;top:303px;width:84.5px;height:16.5px;overflow:hidden;border:1px solid;border-color:#fdfdfd #5a5a5a #5a5a5a #fdfdfd;background:#f0f0f0"><span class="a t s" style="left:2px;top:2px;font-size:11.6px">国家医保名称</span></div>
<div class="a " style="left:382.5px;top:320px;width:462.5px;height:224.38000000000002px;background:#f0f0f0"></div>
<div class="a " style="left:382.5px;top:320.0px;width:462.5px;height:17.26px;background:#3a98f8"></div>
<div class="a t" style="left:366px;top:322.50px;width:15px;text-align:right;font-size:13.4px;color:#000090;font-family:'Liberation Serif',serif;font-weight:bold;letter-spacing:-0.3px">0</div>
<div class="a" style="left:383.5px;top:320.00px;width:88.5px;height:17.26px;overflow:hidden;"><span class="a t s f13" style="top:2.5px;font-size:12.460px;color:#e02848;left:2px;">阿胶<span class="m">(</span>东阿<span class="m">)</span></span></div>
<div class="a" style="left:474px;top:320.00px;width:27.5px;height:17.26px;overflow:hidden;"><span class="a t s f13" style="top:2.5px;font-size:12.460px;color:#e02848;left:2px;"><span class="m">1000g</span></span></div>
<div class="a" style="left:503.5px;top:320.00px;width:30.0px;height:17.26px;overflow:hidden;"><span class="a t s f13" style="top:2.5px;font-size:12.460px;color:#e02848;left:2px;"><span class="m">3.5/g</span></span></div>
<div class="a" style="left:535.5px;top:320.00px;width:32.5px;height:17.26px;overflow:hidden;"><span class="a t s f13" style="top:2.5px;font-size:12.460px;color:#e02848;left:2px;"><span class="m">27803</span></span></div>
<div class="a" style="left:570px;top:320.00px;width:16.5px;height:17.26px;overflow:hidden;"><span class="a t s f13" style="top:2.5px;font-size:12.460px;color:#e02848;left:2px;">自</span></div>
<div class="a" style="left:588.5px;top:320.00px;width:16.5px;height:17.26px;overflow:hidden;"><span class="a t s f13" style="top:2.5px;font-size:12.460px;color:#e02848;right:2px;"><span class="m">1</span></span></div>
<div class="a" style="left:607px;top:320.00px;width:32.5px;height:17.26px;overflow:hidden;"><span class="a t s f13" style="top:2.5px;font-size:12.460px;color:#e02848;left:2px;">基本用</span></div>
<div class="a" style="left:692px;top:320.00px;width:67.5px;height:17.26px;overflow:hidden;"><span class="a t s f13" style="top:2.5px;font-size:12.460px;color:#e02848;left:2px;"><span class="m">T001700233</span></span></div>
<div class="a" style="left:761.5px;top:320.00px;width:82.5px;height:17.26px;overflow:hidden;"><span class="a t s f13" style="top:2.5px;font-size:12.460px;color:#e02848;left:2px;">阿胶</span></div>
<div class="a " style="left:382.5px;top:336.26px;width:462.5px;height:1px;background:#7ab8fa"></div>
<div class="a t" style="left:366px;top:339.76px;width:15px;text-align:right;font-size:13.4px;color:#000090;font-family:'Liberation Serif',serif;font-weight:bold;letter-spacing:-0.3px">1</div>
<div class="a" style="left:383.5px;top:337.26px;width:88.5px;height:17.26px;overflow:hidden;"><span class="a t s f13" style="top:2.5px;font-size:12.460px;color:#000;left:2px;">阿胶珠</span></div>
<div class="a" style="left:474px;top:337.26px;width:27.5px;height:17.26px;overflow:hidden;"><span class="a t s f13" style="top:2.5px;font-size:12.460px;color:#000;left:2px;"><span class="m">3g/</span>袋</span></div>
<div class="a" style="left:503.5px;top:337.26px;width:30.0px;height:17.26px;overflow:hidden;"><span class="a t s f13" style="top:2.5px;font-size:12.460px;color:#000;left:2px;"><span class="m">29.8</span></span></div>
<div class="a" style="left:535.5px;top:337.26px;width:32.5px;height:17.26px;overflow:hidden;"><span class="a t s f13" style="top:2.5px;font-size:12.460px;color:#000;left:2px;"><span class="m">18413</span></span></div>
<div class="a" style="left:570px;top:337.26px;width:16.5px;height:17.26px;overflow:hidden;"><span class="a t s f13" style="top:2.5px;font-size:12.460px;color:#000;left:2px;">乙</span></div>
<div class="a" style="left:588.5px;top:337.26px;width:16.5px;height:17.26px;overflow:hidden;"><span class="a t s f13" style="top:2.5px;font-size:12.460px;color:#000;right:2px;"><span class="m">0</span></span></div>
<div class="a" style="left:607px;top:337.26px;width:32.5px;height:17.26px;overflow:hidden;"><span class="a t s f13" style="top:2.5px;font-size:12.460px;color:#000;left:2px;">基本用</span></div>
<div class="a" style="left:692px;top:337.26px;width:67.5px;height:17.26px;overflow:hidden;"><span class="a t s f13" style="top:2.5px;font-size:12.460px;color:#000;left:2px;"><span class="m">T001700234</span></span></div>
<div class="a" style="left:761.5px;top:337.26px;width:82.5px;height:17.26px;overflow:hidden;"><span class="a t s f13" style="top:2.5px;font-size:12.460px;color:#000;left:2px;">阿胶珠</span></div>
<div class="a " style="left:382.5px;top:353.52px;width:462.5px;height:1px;background:#d4d4d4"></div>
<div class="a t" style="left:366px;top:357.02px;width:15px;text-align:right;font-size:13.4px;color:#000090;font-family:'Liberation Serif',serif;font-weight:bold;letter-spacing:-0.3px">2</div>
<div class="a" style="left:383.5px;top:354.52px;width:88.5px;height:17.26px;overflow:hidden;"><span class="a t s f13" style="top:2.5px;font-size:12.460px;color:#000;left:2px;">艾绒</span></div>
<div class="a" style="left:474px;top:354.52px;width:27.5px;height:17.26px;overflow:hidden;"><span class="a t s f13" style="top:2.5px;font-size:12.460px;color:#000;left:2px;"><span class="m">1000g</span></span></div>
<div class="a" style="left:503.5px;top:354.52px;width:30.0px;height:17.26px;overflow:hidden;"><span class="a t s f13" style="top:2.5px;font-size:12.460px;color:#000;left:2px;"><span class="m">.102</span></span></div>
<div class="a" style="left:535.5px;top:354.52px;width:32.5px;height:17.26px;overflow:hidden;"><span class="a t s f13" style="top:2.5px;font-size:12.460px;color:#000;left:2px;"><span class="m">26238</span></span></div>
<div class="a" style="left:570px;top:354.52px;width:16.5px;height:17.26px;overflow:hidden;"><span class="a t s f13" style="top:2.5px;font-size:12.460px;color:#000;left:2px;">乙</span></div>
<div class="a" style="left:588.5px;top:354.52px;width:16.5px;height:17.26px;overflow:hidden;"><span class="a t s f13" style="top:2.5px;font-size:12.460px;color:#000;right:2px;"><span class="m">0</span></span></div>
<div class="a" style="left:607px;top:354.52px;width:32.5px;height:17.26px;overflow:hidden;"><span class="a t s f13" style="top:2.5px;font-size:12.460px;color:#000;left:2px;">基本用</span></div>
<div class="a" style="left:692px;top:354.52px;width:67.5px;height:17.26px;overflow:hidden;"><span class="a t s f13" style="top:2.5px;font-size:12.460px;color:#000;left:2px;"><span class="m">T371101656</span></span></div>
<div class="a" style="left:761.5px;top:354.52px;width:82.5px;height:17.26px;overflow:hidden;"><span class="a t s f13" style="top:2.5px;font-size:12.460px;color:#000;left:2px;">艾绒</span></div>
<div class="a " style="left:382.5px;top:370.78px;width:462.5px;height:1px;background:#d4d4d4"></div>
<div class="a t" style="left:366px;top:374.28px;width:15px;text-align:right;font-size:13.4px;color:#000090;font-family:'Liberation Serif',serif;font-weight:bold;letter-spacing:-0.3px">3</div>
<div class="a" style="left:383.5px;top:371.78px;width:88.5px;height:17.26px;overflow:hidden;"><span class="a t s f13" style="top:2.5px;font-size:12.460px;color:#000;left:2px;">艾绒</span></div>
<div class="a" style="left:474px;top:371.78px;width:27.5px;height:17.26px;overflow:hidden;"><span class="a t s f13" style="top:2.5px;font-size:12.460px;color:#000;left:2px;"><span class="m">1000g</span></span></div>
<div class="a" style="left:503.5px;top:371.78px;width:30.0px;height:17.26px;overflow:hidden;"><span class="a t s f13" style="top:2.5px;font-size:12.460px;color:#000;left:2px;"><span class="m">.102</span></span></div>
<div class="a" style="left:535.5px;top:371.78px;width:32.5px;height:17.26px;overflow:hidden;"><span class="a t s f13" style="top:2.5px;font-size:12.460px;color:#000;left:2px;"><span class="m">26238</span></span></div>
<div class="a" style="left:570px;top:371.78px;width:16.5px;height:17.26px;overflow:hidden;"><span class="a t s f13" style="top:2.5px;font-size:12.460px;color:#000;left:2px;">乙</span></div>
<div class="a" style="left:588.5px;top:371.78px;width:16.5px;height:17.26px;overflow:hidden;"><span class="a t s f13" style="top:2.5px;font-size:12.460px;color:#000;right:2px;"><span class="m">0</span></span></div>
<div class="a" style="left:607px;top:371.78px;width:32.5px;height:17.26px;overflow:hidden;"><span class="a t s f13" style="top:2.5px;font-size:12.460px;color:#000;left:2px;">基本用</span></div>
<div class="a" style="left:692px;top:371.78px;width:67.5px;height:17.26px;overflow:hidden;"><span class="a t s f13" style="top:2.5px;font-size:12.460px;color:#000;left:2px;"><span class="m">T371101656</span></span></div>
<div class="a" style="left:761.5px;top:371.78px;width:82.5px;height:17.26px;overflow:hidden;"><span class="a t s f13" style="top:2.5px;font-size:12.460px;color:#000;left:2px;">艾绒</span></div>
<div class="a " style="left:382.5px;top:388.03999999999996px;width:462.5px;height:1px;background:#d4d4d4"></div>
<div class="a t" style="left:366px;top:391.54px;width:15px;text-align:right;font-size:13.4px;color:#000090;font-family:'Liberation Serif',serif;font-weight:bold;letter-spacing:-0.3px">4</div>
<div class="a" style="left:383.5px;top:389.04px;width:88.5px;height:17.26px;overflow:hidden;"><span class="a t s f13" style="top:2.5px;font-size:12.460px;color:#000;left:2px;">艾绒炭</span></div>
<div class="a" style="left:474px;top:389.04px;width:27.5px;height:17.26px;overflow:hidden;"><span class="a t s f13" style="top:2.5px;font-size:12.460px;color:#000;left:2px;"><span class="m">1000g</span></span></div>
<div class="a" style="left:503.5px;top:389.04px;width:30.0px;height:17.26px;overflow:hidden;"><span class="a t s f13" style="top:2.5px;font-size:12.460px;color:#000;left:2px;"><span class="m">.051</span></span></div>
<div class="a" style="left:535.5px;top:389.04px;width:32.5px;height:17.26px;overflow:hidden;"><span class="a t s f13" style="top:2.5px;font-size:12.460px;color:#000;left:2px;"><span class="m">14978</span></span></div>
<div class="a" style="left:570px;top:389.04px;width:16.5px;height:17.26px;overflow:hidden;"><span class="a t s f13" style="top:2.5px;font-size:12.460px;color:#000;left:2px;">乙</span></div>
<div class="a" style="left:588.5px;top:389.04px;width:16.5px;height:17.26px;overflow:hidden;"><span class="a t s f13" style="top:2.5px;font-size:12.460px;color:#000;right:2px;"><span class="m">0</span></span></div>
<div class="a" style="left:607px;top:389.04px;width:32.5px;height:17.26px;overflow:hidden;"><span class="a t s f13" style="top:2.5px;font-size:12.460px;color:#000;left:2px;">基本用</span></div>
<div class="a" style="left:692px;top:389.04px;width:67.5px;height:17.26px;overflow:hidden;"><span class="a t s f13" style="top:2.5px;font-size:12.460px;color:#000;left:2px;"><span class="m">T371101657</span></span></div>
<div class="a" style="left:761.5px;top:389.04px;width:82.5px;height:17.26px;overflow:hidden;"><span class="a t s f13" style="top:2.5px;font-size:12.460px;color:#000;left:2px;">艾叶炭</span></div>
<div class="a " style="left:382.5px;top:405.3px;width:462.5px;height:1px;background:#d4d4d4"></div>
<div class="a t" style="left:366px;top:408.80px;width:15px;text-align:right;font-size:13.4px;color:#000090;font-family:'Liberation Serif',serif;font-weight:bold;letter-spacing:-0.3px">5</div>
<div class="a" style="left:383.5px;top:406.30px;width:88.5px;height:17.26px;overflow:hidden;"><span class="a t s f13" style="top:2.5px;font-size:12.460px;color:#000;left:2px;">艾叶</span></div>
<div class="a" style="left:474px;top:406.30px;width:27.5px;height:17.26px;overflow:hidden;"><span class="a t s f13" style="top:2.5px;font-size:12.460px;color:#000;left:2px;"><span class="m">1000g</span></span></div>
<div class="a" style="left:503.5px;top:406.30px;width:30.0px;height:17.26px;overflow:hidden;"><span class="a t s f13" style="top:2.5px;font-size:12.460px;color:#000;left:2px;"><span class="m">.028</span></span></div>
<div class="a" style="left:535.5px;top:406.30px;width:32.5px;height:17.26px;overflow:hidden;"><span class="a t s f13" style="top:2.5px;font-size:12.460px;color:#000;left:2px;"><span class="m">31613</span></span></div>
<div class="a" style="left:570px;top:406.30px;width:16.5px;height:17.26px;overflow:hidden;"><span class="a t s f13" style="top:2.5px;font-size:12.460px;color:#000;left:2px;">乙</span></div>
<div class="a" style="left:588.5px;top:406.30px;width:16.5px;height:17.26px;overflow:hidden;"><span class="a t s f13" style="top:2.5px;font-size:12.460px;color:#000;right:2px;"><span class="m">0</span></span></div>
<div class="a" style="left:607px;top:406.30px;width:32.5px;height:17.26px;overflow:hidden;"><span class="a t s f13" style="top:2.5px;font-size:12.460px;color:#000;left:2px;">基本用</span></div>
<div class="a" style="left:692px;top:406.30px;width:67.5px;height:17.26px;overflow:hidden;"><span class="a t s f13" style="top:2.5px;font-size:12.460px;color:#000;left:2px;"><span class="m">T001100003</span></span></div>
<div class="a" style="left:761.5px;top:406.30px;width:82.5px;height:17.26px;overflow:hidden;"><span class="a t s f13" style="top:2.5px;font-size:12.460px;color:#000;left:2px;">艾叶</span></div>
<div class="a " style="left:382.5px;top:422.56px;width:462.5px;height:1px;background:#d4d4d4"></div>
<div class="a t" style="left:366px;top:426.06px;width:15px;text-align:right;font-size:13.4px;color:#000090;font-family:'Liberation Serif',serif;font-weight:bold;letter-spacing:-0.3px">6</div>
<div class="a" style="left:383.5px;top:423.56px;width:88.5px;height:17.26px;overflow:hidden;"><span class="a t s f13" style="top:2.5px;font-size:12.460px;color:#000;left:2px;">艾叶炭</span></div>
<div class="a" style="left:474px;top:423.56px;width:27.5px;height:17.26px;overflow:hidden;"><span class="a t s f13" style="top:2.5px;font-size:12.460px;color:#000;left:2px;"><span class="m">1000g</span></span></div>
<div class="a" style="left:503.5px;top:423.56px;width:30.0px;height:17.26px;overflow:hidden;"><span class="a t s f13" style="top:2.5px;font-size:12.460px;color:#000;left:2px;"><span class="m">.051</span></span></div>
<div class="a" style="left:535.5px;top:423.56px;width:32.5px;height:17.26px;overflow:hidden;"><span class="a t s f13" style="top:2.5px;font-size:12.460px;color:#000;left:2px;"><span class="m">14978</span></span></div>
<div class="a" style="left:570px;top:423.56px;width:16.5px;height:17.26px;overflow:hidden;"><span class="a t s f13" style="top:2.5px;font-size:12.460px;color:#000;left:2px;">乙</span></div>
<div class="a" style="left:588.5px;top:423.56px;width:16.5px;height:17.26px;overflow:hidden;"><span class="a t s f13" style="top:2.5px;font-size:12.460px;color:#000;right:2px;"><span class="m">0</span></span></div>
<div class="a" style="left:607px;top:423.56px;width:32.5px;height:17.26px;overflow:hidden;"><span class="a t s f13" style="top:2.5px;font-size:12.460px;color:#000;left:2px;">基本用</span></div>
<div class="a" style="left:692px;top:423.56px;width:67.5px;height:17.26px;overflow:hidden;"><span class="a t s f13" style="top:2.5px;font-size:12.460px;color:#000;left:2px;"><span class="m">T371101657</span></span></div>
<div class="a" style="left:761.5px;top:423.56px;width:82.5px;height:17.26px;overflow:hidden;"><span class="a t s f13" style="top:2.5px;font-size:12.460px;color:#000;left:2px;">艾叶炭</span></div>
<div class="a " style="left:382.5px;top:439.82px;width:462.5px;height:1px;background:#d4d4d4"></div>
<div class="a t" style="left:366px;top:443.32px;width:15px;text-align:right;font-size:13.4px;color:#000090;font-family:'Liberation Serif',serif;font-weight:bold;letter-spacing:-0.3px">7</div>
<div class="a" style="left:383.5px;top:440.82px;width:88.5px;height:17.26px;overflow:hidden;"><span class="a t s f13" style="top:2.5px;font-size:12.460px;color:#000;left:2px;">百部</span></div>
<div class="a" style="left:474px;top:440.82px;width:27.5px;height:17.26px;overflow:hidden;"><span class="a t s f13" style="top:2.5px;font-size:12.460px;color:#000;left:2px;"><span class="m">1000g</span></span></div>
<div class="a" style="left:503.5px;top:440.82px;width:30.0px;height:17.26px;overflow:hidden;"><span class="a t s f13" style="top:2.5px;font-size:12.460px;color:#000;left:2px;"><span class="m">.11/</span></span></div>
<div class="a" style="left:535.5px;top:440.82px;width:32.5px;height:17.26px;overflow:hidden;"><span class="a t s f13" style="top:2.5px;font-size:12.460px;color:#000;left:2px;"><span class="m">67613</span></span></div>
<div class="a" style="left:570px;top:440.82px;width:16.5px;height:17.26px;overflow:hidden;"><span class="a t s f13" style="top:2.5px;font-size:12.460px;color:#000;left:2px;">乙</span></div>
<div class="a" style="left:588.5px;top:440.82px;width:16.5px;height:17.26px;overflow:hidden;"><span class="a t s f13" style="top:2.5px;font-size:12.460px;color:#000;right:2px;"><span class="m">0</span></span></div>
<div class="a" style="left:607px;top:440.82px;width:32.5px;height:17.26px;overflow:hidden;"><span class="a t s f13" style="top:2.5px;font-size:12.460px;color:#000;left:2px;">基本用</span></div>
<div class="a" style="left:692px;top:440.82px;width:67.5px;height:17.26px;overflow:hidden;"><span class="a t s f13" style="top:2.5px;font-size:12.460px;color:#000;left:2px;"><span class="m">T001300008</span></span></div>
<div class="a" style="left:761.5px;top:440.82px;width:82.5px;height:17.26px;overflow:hidden;"><span class="a t s f13" style="top:2.5px;font-size:12.460px;color:#000;left:2px;">百部</span></div>
<div class="a " style="left:382.5px;top:457.08px;width:462.5px;height:1px;background:#d4d4d4"></div>
<div class="a t" style="left:366px;top:460.58px;width:15px;text-align:right;font-size:13.4px;color:#000090;font-family:'Liberation Serif',serif;font-weight:bold;letter-spacing:-0.3px">8</div>
<div class="a" style="left:383.5px;top:458.08px;width:88.5px;height:17.26px;overflow:hidden;"><span class="a t s f13" style="top:2.5px;font-size:12.460px;color:#000;left:2px;">荜茇</span></div>
<div class="a" style="left:474px;top:458.08px;width:27.5px;height:17.26px;overflow:hidden;"><span class="a t s f13" style="top:2.5px;font-size:12.460px;color:#000;left:2px;"><span class="m">1000g</span></span></div>
<div class="a" style="left:503.5px;top:458.08px;width:30.0px;height:17.26px;overflow:hidden;"><span class="a t s f13" style="top:2.5px;font-size:12.460px;color:#000;left:2px;"><span class="m">.163</span></span></div>
<div class="a" style="left:535.5px;top:458.08px;width:32.5px;height:17.26px;overflow:hidden;"><span class="a t s f13" style="top:2.5px;font-size:12.460px;color:#000;left:2px;"><span class="m">18678</span></span></div>
<div class="a" style="left:570px;top:458.08px;width:16.5px;height:17.26px;overflow:hidden;"><span class="a t s f13" style="top:2.5px;font-size:12.460px;color:#000;left:2px;">乙</span></div>
<div class="a" style="left:588.5px;top:458.08px;width:16.5px;height:17.26px;overflow:hidden;"><span class="a t s f13" style="top:2.5px;font-size:12.460px;color:#000;right:2px;"><span class="m">0</span></span></div>
<div class="a" style="left:607px;top:458.08px;width:32.5px;height:17.26px;overflow:hidden;"><span class="a t s f13" style="top:2.5px;font-size:12.460px;color:#000;left:2px;">基本用</span></div>
<div class="a" style="left:692px;top:458.08px;width:67.5px;height:17.26px;overflow:hidden;"><span class="a t s f13" style="top:2.5px;font-size:12.460px;color:#000;left:2px;"><span class="m">T000700050</span></span></div>
<div class="a" style="left:761.5px;top:458.08px;width:82.5px;height:17.26px;overflow:hidden;"><span class="a t s f13" style="top:2.5px;font-size:12.460px;color:#000;left:2px;">荜茇</span></div>
<div class="a " style="left:382.5px;top:474.34000000000003px;width:462.5px;height:1px;background:#d4d4d4"></div>
<div class="a t" style="left:366px;top:477.84px;width:15px;text-align:right;font-size:13.4px;color:#000090;font-family:'Liberation Serif',serif;font-weight:bold;letter-spacing:-0.3px">9</div>
<div class="a" style="left:383.5px;top:475.34px;width:88.5px;height:17.26px;overflow:hidden;"><span class="a t s f13" style="top:2.5px;font-size:12.460px;color:#000;left:2px;">白扁豆</span></div>
<div class="a" style="left:474px;top:475.34px;width:27.5px;height:17.26px;overflow:hidden;"><span class="a t s f13" style="top:2.5px;font-size:12.460px;color:#000;left:2px;"><span class="m">1000g</span></span></div>
<div class="a" style="left:503.5px;top:475.34px;width:30.0px;height:17.26px;overflow:hidden;"><span class="a t s f13" style="top:2.5px;font-size:12.460px;color:#000;left:2px;"><span class="m">.056</span></span></div>
<div class="a" style="left:535.5px;top:475.34px;width:32.5px;height:17.26px;overflow:hidden;"><span class="a t s f13" style="top:2.5px;font-size:12.460px;color:#000;left:2px;"><span class="m">26774</span></span></div>
<div class="a" style="left:570px;top:475.34px;width:16.5px;height:17.26px;overflow:hidden;"><span class="a t s f13" style="top:2.5px;font-size:12.460px;color:#000;left:2px;">乙</span></div>
<div class="a" style="left:588.5px;top:475.34px;width:16.5px;height:17.26px;overflow:hidden;"><span class="a t s f13" style="top:2.5px;font-size:12.460px;color:#000;right:2px;"><span class="m">0</span></span></div>
<div class="a" style="left:607px;top:475.34px;width:32.5px;height:17.26px;overflow:hidden;"><span class="a t s f13" style="top:2.5px;font-size:12.460px;color:#000;left:2px;">基本用</span></div>
<div class="a" style="left:692px;top:475.34px;width:67.5px;height:17.26px;overflow:hidden;"><span class="a t s f13" style="top:2.5px;font-size:12.460px;color:#000;left:2px;"><span class="m">T001700007</span></span></div>
<div class="a" style="left:761.5px;top:475.34px;width:82.5px;height:17.26px;overflow:hidden;"><span class="a t s f13" style="top:2.5px;font-size:12.460px;color:#000;left:2px;">白扁豆</span></div>
<div class="a " style="left:382.5px;top:491.6px;width:462.5px;height:1px;background:#d4d4d4"></div>
<div class="a t" style="left:366px;top:495.10px;width:15px;text-align:right;font-size:13.4px;color:#000090;font-family:'Liberation Serif',serif;font-weight:bold;letter-spacing:-0.3px">10</div>
<div class="a" style="left:383.5px;top:492.60px;width:88.5px;height:17.26px;overflow:hidden;"><span class="a t s f13" style="top:2.5px;font-size:12.460px;color:#000;left:2px;">半边莲</span></div>
<div class="a" style="left:474px;top:492.60px;width:27.5px;height:17.26px;overflow:hidden;"><span class="a t s f13" style="top:2.5px;font-size:12.460px;color:#000;left:2px;"><span class="m">1000g</span></span></div>
<div class="a" style="left:503.5px;top:492.60px;width:30.0px;height:17.26px;overflow:hidden;"><span class="a t s f13" style="top:2.5px;font-size:12.460px;color:#000;left:2px;"><span class="m">.086</span></span></div>
<div class="a" style="left:535.5px;top:492.60px;width:32.5px;height:17.26px;overflow:hidden;"><span class="a t s f13" style="top:2.5px;font-size:12.460px;color:#000;left:2px;"><span class="m">14653</span></span></div>
<div class="a" style="left:570px;top:492.60px;width:16.5px;height:17.26px;overflow:hidden;"><span class="a t s f13" style="top:2.5px;font-size:12.460px;color:#000;left:2px;">乙</span></div>
<div class="a" style="left:588.5px;top:492.60px;width:16.5px;height:17.26px;overflow:hidden;"><span class="a t s f13" style="top:2.5px;font-size:12.460px;color:#000;right:2px;"><span class="m">0</span></span></div>
<div class="a" style="left:607px;top:492.60px;width:32.5px;height:17.26px;overflow:hidden;"><span class="a t s f13" style="top:2.5px;font-size:12.460px;color:#000;left:2px;">基本用</span></div>
<div class="a" style="left:692px;top:492.60px;width:67.5px;height:17.26px;overflow:hidden;"><span class="a t s f13" style="top:2.5px;font-size:12.460px;color:#000;left:2px;"><span class="m">T000200038</span></span></div>
<div class="a" style="left:761.5px;top:492.60px;width:82.5px;height:17.26px;overflow:hidden;"><span class="a t s f13" style="top:2.5px;font-size:12.460px;color:#000;left:2px;">半边莲</span></div>
<div class="a " style="left:382.5px;top:508.86px;width:462.5px;height:1px;background:#d4d4d4"></div>
<div class="a t" style="left:366px;top:512.36px;width:15px;text-align:right;font-size:13.4px;color:#000090;font-family:'Liberation Serif',serif;font-weight:bold;letter-spacing:-0.3px">11</div>
<div class="a" style="left:383.5px;top:509.86px;width:88.5px;height:17.26px;overflow:hidden;"><span class="a t s f13" style="top:2.5px;font-size:12.460px;color:#000;left:2px;">北柴胡</span></div>
<div class="a" style="left:474px;top:509.86px;width:27.5px;height:17.26px;overflow:hidden;"><span class="a t s f13" style="top:2.5px;font-size:12.460px;color:#000;left:2px;"><span class="m">1000g</span></span></div>
<div class="a" style="left:503.5px;top:509.86px;width:30.0px;height:17.26px;overflow:hidden;"><span class="a t s f13" style="top:2.5px;font-size:12.460px;color:#000;left:2px;"><span class="m">.456</span></span></div>
<div class="a" style="left:535.5px;top:509.86px;width:32.5px;height:17.26px;overflow:hidden;"><span class="a t s f13" style="top:2.5px;font-size:12.460px;color:#000;left:2px;"><span class="m">34933</span></span></div>
<div class="a" style="left:570px;top:509.86px;width:16.5px;height:17.26px;overflow:hidden;"><span class="a t s f13" style="top:2.5px;font-size:12.460px;color:#000;left:2px;">乙</span></div>
<div class="a" style="left:588.5px;top:509.86px;width:16.5px;height:17.26px;overflow:hidden;"><span class="a t s f13" style="top:2.5px;font-size:12.460px;color:#000;right:2px;"><span class="m">0</span></span></div>
<div class="a" style="left:607px;top:509.86px;width:32.5px;height:17.26px;overflow:hidden;"><span class="a t s f13" style="top:2.5px;font-size:12.460px;color:#000;left:2px;">基本用</span></div>
<div class="a" style="left:692px;top:509.86px;width:67.5px;height:17.26px;overflow:hidden;"><span class="a t s f13" style="top:2.5px;font-size:12.460px;color:#000;left:2px;"><span class="m">T000100043</span></span></div>
<div class="a" style="left:761.5px;top:509.86px;width:82.5px;height:17.26px;overflow:hidden;"><span class="a t s f13" style="top:2.5px;font-size:12.460px;color:#000;left:2px;">北柴胡</span></div>
<div class="a " style="left:382.5px;top:526.12px;width:462.5px;height:1px;background:#d4d4d4"></div>
<div class="a t" style="left:366px;top:529.62px;width:15px;text-align:right;font-size:13.4px;color:#000090;font-family:'Liberation Serif',serif;font-weight:bold;letter-spacing:-0.3px">12</div>
<div class="a" style="left:383.5px;top:527.12px;width:88.5px;height:17.26px;overflow:hidden;"><span class="a t s f13" style="top:2.5px;font-size:12.460px;color:#000;left:2px;">扁豆花</span></div>
<div class="a" style="left:474px;top:527.12px;width:27.5px;height:17.26px;overflow:hidden;"><span class="a t s f13" style="top:2.5px;font-size:12.460px;color:#000;left:2px;"><span class="m">1000g</span></span></div>
<div class="a" style="left:503.5px;top:527.12px;width:30.0px;height:17.26px;overflow:hidden;"><span class="a t s f13" style="top:2.5px;font-size:12.460px;color:#000;left:2px;"><span class="m">.225</span></span></div>
<div class="a" style="left:535.5px;top:527.12px;width:32.5px;height:17.26px;overflow:hidden;"><span class="a t s f13" style="top:2.5px;font-size:12.460px;color:#000;left:2px;"><span class="m">34638</span></span></div>
<div class="a" style="left:570px;top:527.12px;width:16.5px;height:17.26px;overflow:hidden;"><span class="a t s f13" style="top:2.5px;font-size:12.460px;color:#000;left:2px;">乙</span></div>
<div class="a" style="left:588.5px;top:527.12px;width:16.5px;height:17.26px;overflow:hidden;"><span class="a t s f13" style="top:2.5px;font-size:12.460px;color:#000;right:2px;"><span class="m">0</span></span></div>
<div class="a" style="left:607px;top:527.12px;width:32.5px;height:17.26px;overflow:hidden;"><span class="a t s f13" style="top:2.5px;font-size:12.460px;color:#000;left:2px;">基本用</span></div>
<div class="a" style="left:692px;top:527.12px;width:67.5px;height:17.26px;overflow:hidden;"><span class="a t s f13" style="top:2.5px;font-size:12.460px;color:#000;left:2px;"><span class="m">T001700048</span></span></div>
<div class="a" style="left:761.5px;top:527.12px;width:82.5px;height:17.26px;overflow:hidden;"><span class="a t s f13" style="top:2.5px;font-size:12.460px;color:#000;left:2px;">扁豆花</span></div>
<div class="a " style="left:382.5px;top:543.38px;width:462.5px;height:1px;background:#d4d4d4"></div>
<div class="a " style="left:472px;top:320px;width:1px;height:224.38000000000002px;background:#d4d4d4"></div>
<div class="a " style="left:501.5px;top:320px;width:1px;height:224.38000000000002px;background:#d4d4d4"></div>
<div class="a " style="left:533.5px;top:320px;width:1px;height:224.38000000000002px;background:#d4d4d4"></div>
<div class="a " style="left:568px;top:320px;width:1px;height:224.38000000000002px;background:#d4d4d4"></div>
<div class="a " style="left:586.5px;top:320px;width:1px;height:224.38000000000002px;background:#d4d4d4"></div>
<div class="a " style="left:605px;top:320px;width:1px;height:224.38000000000002px;background:#d4d4d4"></div>
<div class="a " style="left:639.5px;top:320px;width:1px;height:224.38000000000002px;background:#d4d4d4"></div>
<div class="a " style="left:664px;top:320px;width:1px;height:224.38000000000002px;background:#d4d4d4"></div>
<div class="a " style="left:690px;top:320px;width:1px;height:224.38000000000002px;background:#d4d4d4"></div>
<div class="a " style="left:759.5px;top:320px;width:1px;height:224.38000000000002px;background:#d4d4d4"></div>
<div class="a " style="left:844px;top:320px;width:1px;height:224.38000000000002px;background:#d4d4d4"></div>
<div class="a " style="left:381.5px;top:320px;width:1px;height:224.38000000000002px;background:#7a7a7a"></div>
<div class="a " style="left:382.5px;top:320px;width:1px;height:224.38000000000002px;background:#fdfdfd"></div>
<div class="a " style="left:371.5px;top:549.5px;width:475px;height:71px;background:#f1f1f1;border:1px solid;border-color:#5a5a5a #fdfdfd #fdfdfd #5a5a5a;box-shadow:inset 1px 1px 0 #a0a0a0"></div>
<svg class="a" style="left:833px;top:556px" width="9" height="6" viewBox="0 0 9 6"><path d="M0.5 5.5 L4.5 1 L8.5 5.5 Z" fill="#8a8a8a"/></svg>
<svg class="a" style="left:833px;top:607px" width="9" height="6" viewBox="0 0 9 6"><path d="M0.5 0.5 L4.5 5 L8.5 0.5 Z" fill="#8a8a8a"/></svg>
<div class="a " style="left:348px;top:886px;width:1130px;height:1px;background:#d8d8d8"></div>
<span class="a t s f13" style="left:353.5px;top:894.5px;font-size:12.460px">医师</span>
<div class="a " style="left:380.5px;top:890px;width:64.5px;height:21px;overflow:hidden;border:1px solid;border-color:#8a8a8a #fdfdfd #fdfdfd #8a8a8a;background:#f0f0f0"><span class="a t s b f18" style="left:2px;top:1.5px;font-size:16.4px;color:#1414b4;">陈仲伟</span></div>
<span class="a t s f13" style="left:447px;top:894.5px;font-size:12.460px">处方号</span>
<div class="a " style="left:483.5px;top:890px;width:106.5px;height:21px;overflow:hidden;border:1px solid;border-color:#8a8a8a #fdfdfd #fdfdfd #8a8a8a;background:#f0f0f0"><span class="a t s b f18" style="left:2px;top:1.5px;font-size:16.4px;color:#1414b4;"><span class="m">6233632</span></span></div>
<span class="a t s f13" style="left:591.5px;top:894.5px;font-size:12.460px">总金额<span class="m">:</span></span>
<div class="a " style="left:632.5px;top:890px;width:66.5px;height:21px;overflow:hidden;border:1px solid;border-color:#8a8a8a #fdfdfd #fdfdfd #8a8a8a;background:#f0f0f0"><span class="a t s b f18" style="left:2px;top:1.5px;font-size:16.4px;color:#1414b4;"><span class="m">0.00</span></span></div>
<span class="a t s f13" style="left:701px;top:894.5px;font-size:12.460px">状态</span>
<div class="a " style="left:726.5px;top:890px;width:50.5px;height:21px;overflow:hidden;border:1px solid;border-color:#8a8a8a #fdfdfd #fdfdfd #8a8a8a;background:#f0f0f0"><span class="a t s b f18" style="left:2px;top:1.5px;font-size:16.4px;color:#1414b4;">新增</span></div>
<span class="a t s f13" style="left:778.5px;top:894.5px;font-size:12.460px">开方时间</span>
<div class="a " style="left:828px;top:890px;width:120.5px;height:21px;overflow:hidden;border:1px solid;border-color:#8a8a8a #fdfdfd #fdfdfd #8a8a8a;background:#f0f0f0"><span class="a t s b f18" style="left:2px;top:1.5px;font-size:16.4px;color:#1414b4;"><span class="m">20230111 14:20:28</span></span></div>
<div class="a btn" style="left:949px;top:888px;width:72px;height:24.5px;overflow:hidden;"><span class="a t s gray" style="left:2px;top:5px;font-size:13.4px;text-shadow:1px 1px 0 #fff">草药<span class="m">&lt;-&gt;</span>颗粒</span></div>
<div class="a " style="left:348px;top:918px;width:1220px;height:1px;background:#d4d4d4"></div>
<div class="a " style="left:348px;top:919px;width:1220px;height:1px;background:#fdfdfd"></div>
<div class="a " style="left:348px;top:920.5px;width:95px;height:15.5px;background:#f5f5f5"></div>
<div class="a " style="left:444px;top:920.5px;width:46px;height:15.5px;overflow:hidden;border:1px solid;border-color:#a8a8a8 #fdfdfd #fdfdfd #a8a8a8;"><span class="a t y" style="left:2px;top:1.5px;font-size:11.8px;color:#111;letter-spacing:-0.3px">增加</span></div>
<div class="a " style="left:492.5px;top:920.5px;width:44px;height:15.5px;overflow:hidden;border:1px solid;border-color:#a8a8a8 #fdfdfd #fdfdfd #a8a8a8;"><span class="a t y" style="left:2px;top:1.5px;font-size:11.8px;color:#111;letter-spacing:-0.3px">限号数:</span></div>
<div class="a " style="left:539.5px;top:920.5px;width:36px;height:15.5px;overflow:hidden;border:1px solid;border-color:#a8a8a8 #fdfdfd #fdfdfd #a8a8a8;"><span class="a t y" style="left:2px;top:1.5px;font-size:11.8px;color:#111;letter-spacing:-0.3px">50</span></div>
<div class="a " style="left:578px;top:920.5px;width:45.5px;height:15.5px;overflow:hidden;border:1px solid;border-color:#a8a8a8 #fdfdfd #fdfdfd #a8a8a8;"><span class="a t y" style="left:2px;top:1.5px;font-size:11.8px;color:#111;letter-spacing:-0.3px">已挂数:</span></div>
<div class="a " style="left:626px;top:920.5px;width:36px;height:15.5px;overflow:hidden;border:1px solid;border-color:#a8a8a8 #fdfdfd #fdfdfd #a8a8a8;"><span class="a t y" style="left:2px;top:1.5px;font-size:11.8px;color:#111;letter-spacing:-0.3px">20</span></div>
<div class="a " style="left:664.5px;top:920.5px;width:45.5px;height:15.5px;overflow:hidden;border:1px solid;border-color:#a8a8a8 #fdfdfd #fdfdfd #a8a8a8;"><span class="a t y" style="left:2px;top:1.5px;font-size:11.8px;color:#111;letter-spacing:-0.3px">已诊数:</span></div>
<div class="a " style="left:712.5px;top:920.5px;width:36px;height:15.5px;overflow:hidden;border:1px solid;border-color:#a8a8a8 #fdfdfd #fdfdfd #a8a8a8;"><span class="a t y" style="left:2px;top:1.5px;font-size:11.8px;color:#111;letter-spacing:-0.3px">20</span></div>
<div class="a " style="left:751px;top:920.5px;width:79px;height:15.5px;overflow:hidden;border:1px solid;border-color:#a8a8a8 #fdfdfd #fdfdfd #a8a8a8;"><span class="a t y" style="left:2px;top:1.5px;font-size:11.8px;color:#111;letter-spacing:-0.3px">当前挂号信息：</span></div>
<div class="a " style="left:832px;top:920.5px;width:26.5px;height:15.5px;overflow:hidden;border:1px solid;border-color:#a8a8a8 #fdfdfd #fdfdfd #a8a8a8;"><span class="a t y" style="left:2px;top:1.5px;font-size:11.8px;color:#111;letter-spacing:-0.3px">初诊</span></div>
<div class="a " style="left:861.5px;top:920.5px;width:64px;height:15.5px;overflow:hidden;border:1px solid;border-color:#a8a8a8 #fdfdfd #fdfdfd #a8a8a8;"><span class="a t y" style="left:2px;top:1.5px;font-size:11.8px;color:#111;letter-spacing:-0.3px">后勤挂号</span></div>
<div class="a " style="left:928px;top:920.5px;width:45px;height:15.5px;overflow:hidden;border:1px solid;border-color:#a8a8a8 #fdfdfd #fdfdfd #a8a8a8;"><span class="a t y" style="left:2px;top:1.5px;font-size:11.8px;color:#111;letter-spacing:-0.3px">诊查费:</span></div>
<div class="a " style="left:976.5px;top:920.5px;width:35.5px;height:15.5px;overflow:hidden;border:1px solid;border-color:#a8a8a8 #fdfdfd #fdfdfd #a8a8a8;"><span class="a t y" style="left:2px;top:1.5px;font-size:11.8px;color:#111;letter-spacing:-0.3px">0</span></div>
<div class="a " style="left:1015.5px;top:920.5px;width:44px;height:15.5px;overflow:hidden;border:1px solid;border-color:#a8a8a8 #fdfdfd #fdfdfd #a8a8a8;"><span class="a t y" style="left:2px;top:1.5px;font-size:11.8px;color:#111;letter-spacing:-0.3px">挂号员:</span></div>
<div class="a " style="left:1062.5px;top:920.5px;width:505px;height:15.5px;overflow:hidden;border:1px solid;border-color:#a8a8a8 #fdfdfd #fdfdfd #a8a8a8;"><span class="a t y" style="left:2px;top:1.5px;font-size:11.8px;color:#111;letter-spacing:-0.3px">陈仲伟</span></div>
<div class="a " style="left:347px;top:938px;width:1221px;height:20px;background:#f3f3f3"></div>
<div class="a " style="left:347px;top:957.5px;width:1221px;height:1px;background:#fdfdfd"></div>
<div class="a " style="left:350px;top:939px;width:80px;height:18.5px;border:1px solid;border-color:#8a8a8a #fdfdfd #fdfdfd #8a8a8a;background:#f0f0f0"></div>
<span class="a t y" style="left:356px;top:942px;font-size:11.5px;color:#222">门诊病人就诊</span>
<div class="a " style="left:434px;top:940px;width:1px;height:17px;background:#a0a0a0"></div>
<div class="a " style="left:435px;top:940px;width:1px;height:17px;background:#fdfdfd"></div>
<div class="a " style="left:346px;top:959.5px;width:1223.5px;height:20.5px;background:#f0f0f0"></div>
<div class="a " style="left:346px;top:959.5px;width:1223px;height:1px;background:#c8c8c8"></div>
<div class="a " style="left:346.5px;top:961.5px;width:133px;height:17px;overflow:hidden;border:1px solid;border-color:#b4b4b4 #fdfdfd #fdfdfd #b4b4b4;"><span class="a t y" style="left:1.5px;top:2px;font-size:12px;color:#111;letter-spacing:-0.2px">陈仲伟(D350102018838)</span></div>
<div class="a " style="left:482px;top:961.5px;width:74.5px;height:17px;overflow:hidden;border:1px solid;border-color:#b4b4b4 #fdfdfd #fdfdfd #b4b4b4;"><span class="a t y" style="left:1.5px;top:2px;font-size:12px;color:#111;letter-spacing:-0.2px">中医内科</span></div>
<div class="a " style="left:559px;top:961.5px;width:131px;height:17px;overflow:hidden;border:1px solid;border-color:#b4b4b4 #fdfdfd #fdfdfd #b4b4b4;"><span class="a t y" style="left:1.5px;top:2px;font-size:12px;color:#111;letter-spacing:-0.2px">20栋三层,诊室7(工作中)</span></div>
<div class="a " style="left:692.5px;top:961.5px;width:285.5px;height:17px;overflow:hidden;border:1px solid;border-color:#b4b4b4 #fdfdfd #fdfdfd #b4b4b4;"><span class="a t y" style="left:1.5px;top:2px;font-size:12px;color:#111;letter-spacing:-0.2px">福建中医药大学国医堂门诊部(H35010200383)</span></div>
<div class="a " style="left:981px;top:961.5px;width:248px;height:17px;overflow:hidden;border:1px solid;border-color:#b4b4b4 #fdfdfd #fdfdfd #b4b4b4;"><span class="a t y" style="left:1.5px;top:2px;font-size:12px;color:#111;letter-spacing:-0.2px">ESC:取消上下方引用; F8:取消模板引用;Ctrl+Del</span></div>
<div class="a " style="left:1230.5px;top:961.5px;width:285px;height:17px;overflow:hidden;border:1px solid;border-color:#b4b4b4 #fdfdfd #fdfdfd #b4b4b4;"><span class="a t y" style="left:1.5px;top:2px;font-size:12px;color:#111;letter-spacing:-0.2px">2023.01.11 14:20:28</span></div>
<div class="a " style="left:1516.5px;top:960.5px;width:55px;height:18.5px;border-radius:2px;border:1px solid #b0b0b0;background:#f4f4f4;overflow:hidden"><span class="a t y" style="left:4px;top:2.5px;font-size:11.5px;color:#666">显示桌面</span></div>
<div class="a " style="left:346px;top:980px;width:1228px;height:38px;background:linear-gradient(180deg,#5f8bb0 0,#3a6c97 6%,#2f628d 45%,#2a5883 55%,#2c5d88 100%)"></div>
<div class="a " style="left:346px;top:980px;width:1228px;height:1px;background:#7fa3c2"></div>
<svg class="a" style="left:352px;top:980px" width="40" height="38" viewBox="0 0 40 38"><defs><radialGradient id="orb" cx="0.5" cy="0.35" r="0.75"><stop offset="0" stop-color="#9fd4f4"/><stop offset="0.5" stop-color="#3d86c6"/><stop offset="1" stop-color="#123a6e"/></radialGradient></defs><circle cx="20" cy="19" r="17" fill="url(#orb)" stroke="#7fb0d4" stroke-width="1"/><ellipse cx="20" cy="31" rx="10" ry="4.5" fill="#19d0f0" opacity=".55"/><path d="M12.5 12.5 Q16 10.5 19 12 L17.5 18 Q14.5 16.8 11 18.5 Z" fill="#e8532a"/><path d="M20.5 12.5 Q24 14 27.5 12 L26 18 Q22.5 19.8 19 18.5 Z" fill="#8cc63f"/><path d="M10.5 20 Q14 18.3 17 19.7 L15.5 25.5 Q12.5 24.2 9 26 Z" fill="#3fa9f5"/><path d="M18.5 20.3 Q22 21.8 25.5 19.8 L24 25.7 Q20.5 27.5 17 26 Z" fill="#fdc62e"/></svg>
<svg class="a" style="left:402px;top:984.5px" width="9" height="30" viewBox="0 0 9 30"><rect x="0" y="0.0" width="1.6" height="1.6" fill="#1a3c5e"/><rect x="0" y="3.2" width="1.6" height="1.6" fill="#1a3c5e"/><rect x="0" y="6.4" width="1.6" height="1.6" fill="#1a3c5e"/><rect x="0" y="9.600000000000001" width="1.6" height="1.6" fill="#1a3c5e"/><rect x="0" y="12.8" width="1.6" height="1.6" fill="#1a3c5e"/><rect x="0" y="16.0" width="1.6" height="1.6" fill="#1a3c5e"/><rect x="0" y="19.200000000000003" width="1.6" height="1.6" fill="#1a3c5e"/><rect x="0" y="22.400000000000002" width="1.6" height="1.6" fill="#1a3c5e"/><rect x="0" y="25.6" width="1.6" height="1.6" fill="#1a3c5e"/><rect x="3.2" y="0.0" width="1.6" height="1.6" fill="#1a3c5e"/><rect x="3.2" y="3.2" width="1.6" height="1.6" fill="#1a3c5e"/><rect x="3.2" y="6.4" width="1.6" height="1.6" fill="#1a3c5e"/><rect x="3.2" y="9.600000000000001" width="1.6" height="1.6" fill="#1a3c5e"/><rect x="3.2" y="12.8" width="1.6" height="1.6" fill="#1a3c5e"/><rect x="3.2" y="16.0" width="1.6" height="1.6" fill="#1a3c5e"/><rect x="3.2" y="19.200000000000003" width="1.6" height="1.6" fill="#1a3c5e"/><rect x="3.2" y="22.400000000000002" width="1.6" height="1.6" fill="#1a3c5e"/><rect x="3.2" y="25.6" width="1.6" height="1.6" fill="#1a3c5e"/><rect x="6.4" y="0.0" width="1.6" height="1.6" fill="#1a3c5e"/><rect x="6.4" y="3.2" width="1.6" height="1.6" fill="#1a3c5e"/><rect x="6.4" y="6.4" width="1.6" height="1.6" fill="#1a3c5e"/><rect x="6.4" y="9.600000000000001" width="1.6" height="1.6" fill="#1a3c5e"/><rect x="6.4" y="12.8" width="1.6" height="1.6" fill="#1a3c5e"/><rect x="6.4" y="16.0" width="1.6" height="1.6" fill="#1a3c5e"/><rect x="6.4" y="19.200000000000003" width="1.6" height="1.6" fill="#1a3c5e"/><rect x="6.4" y="22.400000000000002" width="1.6" height="1.6" fill="#1a3c5e"/><rect x="6.4" y="25.6" width="1.6" height="1.6" fill="#1a3c5e"/></svg>
<svg class="a" style="left:1316.5px;top:984.5px" width="9" height="30" viewBox="0 0 9 30"><rect x="0" y="0.0" width="1.6" height="1.6" fill="#1a3c5e"/><rect x="0" y="3.2" width="1.6" height="1.6" fill="#1a3c5e"/><rect x="0" y="6.4" width="1.6" height="1.6" fill="#1a3c5e"/><rect x="0" y="9.600000000000001" width="1.6" height="1.6" fill="#1a3c5e"/><rect x="0" y="12.8" width="1.6" height="1.6" fill="#1a3c5e"/><rect x="0" y="16.0" width="1.6" height="1.6" fill="#1a3c5e"/><rect x="0" y="19.200000000000003" width="1.6" height="1.6" fill="#1a3c5e"/><rect x="0" y="22.400000000000002" width="1.6" height="1.6" fill="#1a3c5e"/><rect x="0" y="25.6" width="1.6" height="1.6" fill="#1a3c5e"/><rect x="3.2" y="0.0" width="1.6" height="1.6" fill="#1a3c5e"/><rect x="3.2" y="3.2" width="1.6" height="1.6" fill="#1a3c5e"/><rect x="3.2" y="6.4" width="1.6" height="1.6" fill="#1a3c5e"/><rect x="3.2" y="9.600000000000001" width="1.6" height="1.6" fill="#1a3c5e"/><rect x="3.2" y="12.8" width="1.6" height="1.6" fill="#1a3c5e"/><rect x="3.2" y="16.0" width="1.6" height="1.6" fill="#1a3c5e"/><rect x="3.2" y="19.200000000000003" width="1.6" height="1.6" fill="#1a3c5e"/><rect x="3.2" y="22.400000000000002" width="1.6" height="1.6" fill="#1a3c5e"/><rect x="3.2" y="25.6" width="1.6" height="1.6" fill="#1a3c5e"/><rect x="6.4" y="0.0" width="1.6" height="1.6" fill="#1a3c5e"/><rect x="6.4" y="3.2" width="1.6" height="1.6" fill="#1a3c5e"/><rect x="6.4" y="6.4" width="1.6" height="1.6" fill="#1a3c5e"/><rect x="6.4" y="9.600000000000001" width="1.6" height="1.6" fill="#1a3c5e"/><rect x="6.4" y="12.8" width="1.6" height="1.6" fill="#1a3c5e"/><rect x="6.4" y="16.0" width="1.6" height="1.6" fill="#1a3c5e"/><rect x="6.4" y="19.200000000000003" width="1.6" height="1.6" fill="#1a3c5e"/><rect x="6.4" y="22.400000000000002" width="1.6" height="1.6" fill="#1a3c5e"/><rect x="6.4" y="25.6" width="1.6" height="1.6" fill="#1a3c5e"/></svg>
<div class="a " style="left:419px;top:981.5px;width:80.5px;height:35px;background:linear-gradient(180deg,#6b8fb0 0,#4f799d 45%,#456f94 55%,#4a769a 100%);border:1px solid #86a6c2;border-radius:2.5px;box-shadow:0 0 0 1px #234d74"></div>
<span class="a t y" style="left:458.5px;top:993.5px;font-size:12px;color:#fff;letter-spacing:-0.2px">Win...</span>
<div class="a " style="left:508px;top:981.5px;width:86px;height:35px;background:linear-gradient(180deg,#6b8fb0 0,#4f799d 45%,#456f94 55%,#4a769a 100%);border:1px solid #86a6c2;border-radius:2.5px;box-shadow:0 0 0 1px #234d74"></div>
<span class="a t y" style="left:547.5px;top:993.5px;font-size:12px;color:#fff;letter-spacing:-0.2px">福州...</span>
<div class="a " style="left:597px;top:981.5px;width:86px;height:35px;background:linear-gradient(180deg,#6b8fb0 0,#4f799d 45%,#456f94 55%,#4a769a 100%);border:1px solid #86a6c2;border-radius:2.5px;box-shadow:0 0 0 1px #234d74"></div>
<span class="a t y" style="left:636.5px;top:993.5px;font-size:12px;color:#fff;letter-spacing:-0.2px">SQL ...</span>
<div class="a " style="left:686.5px;top:981.5px;width:86px;height:35px;background:linear-gradient(180deg,#6b8fb0 0,#4f799d 45%,#456f94 55%,#4a769a 100%);border:1px solid #86a6c2;border-radius:2.5px;box-shadow:0 0 0 1px #234d74"></div>
<span class="a t y" style="left:726.0px;top:993.5px;font-size:12px;color:#fff;letter-spacing:-0.2px">sd_h...</span>
<div class="a " style="left:776px;top:981.5px;width:85px;height:35px;background:linear-gradient(180deg,#6b8fb0 0,#4f799d 45%,#456f94 55%,#4a769a 100%);border:1px solid #86a6c2;border-radius:2.5px;box-shadow:0 0 0 1px #234d74"></div>
<span class="a t y" style="left:815.5px;top:993.5px;font-size:12px;color:#fff;letter-spacing:-0.2px">SQL ...</span>
<div class="a " style="left:864.5px;top:981.5px;width:85.5px;height:35px;background:linear-gradient(180deg,#6b8fb0 0,#4f799d 45%,#456f94 55%,#4a769a 100%);border:1px solid #86a6c2;border-radius:2.5px;box-shadow:0 0 0 1px #234d74"></div>
<span class="a t y" style="left:904.0px;top:993.5px;font-size:12px;color:#fff;letter-spacing:-0.2px">项目...</span>
<div class="a " style="left:953.5px;top:981.5px;width:86px;height:35px;background:linear-gradient(180deg,#6b8fb0 0,#4f799d 45%,#456f94 55%,#4a769a 100%);border:1px solid #86a6c2;border-radius:2.5px;box-shadow:0 0 0 1px #234d74"></div>
<span class="a t y" style="left:993.0px;top:993.5px;font-size:12px;color:#fff;letter-spacing:-0.2px">国家...</span>
<div class="a " style="left:1043.5px;top:981.5px;width:85px;height:35px;background:linear-gradient(180deg,#6b8fb0 0,#4f799d 45%,#456f94 55%,#4a769a 100%);border:1px solid #86a6c2;border-radius:2.5px;box-shadow:0 0 0 1px #234d74"></div>
<span class="a t y" style="left:1083.0px;top:993.5px;font-size:12px;color:#fff;letter-spacing:-0.2px">两定...</span>
<div class="a " style="left:1132px;top:981.5px;width:85px;height:35px;background:linear-gradient(180deg,#6b8fb0 0,#4f799d 45%,#456f94 55%,#4a769a 100%);border:1px solid #86a6c2;border-radius:2.5px;box-shadow:0 0 0 1px #234d74"></div>
<span class="a t y" style="left:1171.5px;top:993.5px;font-size:12px;color:#fff;letter-spacing:-0.2px">门诊...</span>
<div class="a " style="left:1220px;top:981.5px;width:84.5px;height:35px;background:linear-gradient(180deg,#a9bdcd 0,#8da7bc 45%,#809db4 55%,#8fabc0 100%);border:1px solid #e4ecf2;border-radius:2.5px;box-shadow:0 0 0 1px #234d74"></div>
<span class="a t y" style="left:1259.5px;top:993.5px;font-size:12px;color:#fff;letter-spacing:-0.2px">门诊...</span>
<div class="a " style="left:503px;top:982px;width:1px;height:34px;background:#6d95b6"></div>
<div class="a " style="left:504px;top:982px;width:1px;height:34px;background:#1f4a70"></div>
<svg class="a" style="left:0;top:0" width="1920" height="1029" viewBox="0 0 1920 1029"><g transform="translate(424,985)"><path d="M0 4 H10 L12 6 H28 V24 H0 Z" fill="#f3d774"/><path d="M2 2 H11 V5 H2Z" fill="#f8e9a8"/><path d="M14 4 H25 V8 H14Z" fill="#f8e9a8"/><rect x="3" y="3" width="2" height="1.5" fill="#2a9a3a"/><rect x="8" y="3" width="2" height="1.5" fill="#d03030"/><path d="M5 15 H25 V28 H21 V22 H9 V28 H5 Z" fill="#58b0f0"/><path d="M7 17 H23 V20 H7Z" fill="#a8dcfa"/></g><g transform="translate(513.5,983.5)"><rect x="0" y="0" width="31" height="31" rx="5" fill="#f39a43"/><path d="M7 12 H24 V23 H7 Z" fill="#fbe9d6"/><path d="M12 12 V9.5 H19 V12" fill="none" stroke="#fbe9d6" stroke-width="1.5"/><path d="M7 16.5 H24" stroke="#f39a43" stroke-width="1.2"/></g><g transform="translate(603,983.5)"><rect x="0.7" y="0.7" width="29" height="23" rx="2" fill="#c8c8d0" stroke="#000" stroke-width="1.4"/><rect x="3.5" y="3.5" width="23.5" height="17" fill="#1a2a9a"/><path d="M6 6.5 H14 M6 9.5 H12 M6 12.5 H11 M6 15.5 H10" stroke="#8ab0ff" stroke-width="1"/><circle cx="17.5" cy="16.5" r="7.5" fill="#2030d0" stroke="#dfe6ff" stroke-width="1.6"/><path d="M23 22 L30 29.5" stroke="#e03020" stroke-width="2.6"/></g><g transform="translate(692,984)"><path d="M8 5 V26 Q18 32 28 26 V5 Z" fill="#b83a86"/><ellipse cx="18" cy="5" rx="10" ry="3.5" fill="#e89ac8"/><path d="M8 12 Q18 17 28 12 M8 19 Q18 24 28 19" fill="none" stroke="#e6a0cc" stroke-width="1.2"/><circle cx="8" cy="22" r="6.5" fill="#c8c8c8" stroke="#eee" stroke-width="2" stroke-dasharray="2.5 2"/><circle cx="8" cy="22" r="2.2" fill="#777"/></g><g transform="translate(781,984)"><circle cx="15.5" cy="15" r="13.5" fill="#3a4a78" stroke="#9aa6c8" stroke-width="1.6"/><path d="M15.5 1 L18 12.5 L29 15 L18 17.5 L15.5 29 L13 17.5 L2 15 L13 12.5 Z" fill="#f2f2f6"/><path d="M7 6.5 L14 13 M24 6.5 L17 13 M7 23.5 L14 17 M24 23.5 L17 17" stroke="#c8ccdc" stroke-width="1.4"/></g><g transform="translate(869.5,983)"><rect x="0" y="0" width="31" height="33" fill="#fff"/><path d="M3 3 L15.5 16 L28 3 M15.5 16 V32 M8 20 H23 M8 26 H23" stroke="#1a3aa0" stroke-width="2.2" fill="none"/><path d="M12 6.5 H19 M15.5 3 V10" stroke="#1a3aa0" stroke-width="2"/></g><g transform="translate(960.5,984.5)"><circle cx="15" cy="15" r="14" fill="#fff"/><path d="M15 15 L2.9 8 A14 14 0 0 1 27.1 8 Z" fill="#e33b2e"/><path d="M15 15 L27.1 8 A14 14 0 0 1 15 29 Z" fill="#fbc116"/><path d="M15 15 L15 29 A14 14 0 0 1 2.9 8 Z" fill="#2da94f"/><circle cx="15" cy="15" r="6.5" fill="#fff"/><circle cx="15" cy="15" r="5" fill="#4a8af4"/></g><g transform="translate(1049.5,984)"><circle cx="14.5" cy="15.5" r="13" fill="#3cb83c" stroke="#bfeebf" stroke-width="1.6"/><path d="M7.5 15.5 H21.5 Q21.5 9 14.5 9 Q8 9 7.5 15.5 Q7.5 22.5 14.5 22.5 Q19.5 22.5 21 19" fill="none" stroke="#fff" stroke-width="2.6"/><path d="M3 9 Q14 -3 28 5" fill="none" stroke="#7fdc6a" stroke-width="1.6"/></g><g transform="translate(1137,983.5)"><rect x="0" y="0" width="31" height="32" fill="#fff"/><path d="M15.5 2 L21 8 L29 9 L26 16 L29 24 L20 25 L15.5 31 L10 25 L2 24 L5 16 L2 9 L10 8 Z" fill="#f2c21a"/><path d="M9 13 H22 M9 18 H22 M15.5 10 V26" stroke="#c88a00" stroke-width="1.8"/></g><g transform="translate(1225.5,983.5)"><rect x="0" y="0" width="31" height="32" fill="#fff"/><path d="M15.5 2 L29 10 L26 24 L15.5 31 L4 24 L2 10 Z" fill="#39c2e8"/><rect x="9" y="16" width="10" height="8" fill="#3a78d8"/><path d="M17 6 Q24 4 27 10 L22 13 Q19 12 17 6z" fill="#111"/><circle cx="21.5" cy="8.5" r="1.2" fill="#fff"/><path d="M23 12 L28 14" stroke="#e02020" stroke-width="1.6"/></g><g transform="translate(1333,990)"><rect x="0.5" y="3.5" width="14" height="8" rx="1" fill="none" stroke="#d8e4ee" stroke-width="1.2"/><path d="M3 6 H12.5 M3 8.5 H12.5" stroke="#d8e4ee" stroke-width="1" stroke-dasharray="1.5 1"/><path d="M7 3 Q7 1 10 1" fill="none" stroke="#d8e4ee" stroke-width="1"/></g><path d="M1362.5 1002 L1366 997.5 L1369.5 1002 Z" fill="#f2f6fa"/><g transform="translate(1381.5,991)"><path d="M7 0 L14 2.5 V8 Q14 13 7 15.5 Q0 13 0 8 V2.5 Z" fill="#f4f8f4" stroke="#d0e0d0" stroke-width=".6"/><path d="M7 2.5 L11.8 4.2 V8 Q11.8 11.5 7 13.2 Q2.2 11.5 2.2 8 V4.2 Z" fill="#3cae3c"/><path d="M4.5 8 L6.5 10 L10 6" stroke="#fff" stroke-width="1.4" fill="none"/></g><g transform="translate(1404.5,992)"><circle cx="7.5" cy="7" r="7" fill="#e8c81a"/><path d="M3.5 7 H11.5 M7.5 3 V11" stroke="#1a8a1a" stroke-width="2.2"/></g><g transform="translate(1428,990)"><path d="M2 0 V5 M5 0 V5 M1 5 H6 V8 H1 Z M3.5 8 V13" stroke="#f2f6fa" stroke-width="1.2" fill="none"/><rect x="5.5" y="5.5" width="9" height="7" fill="#4a6a8a" stroke="#f2f6fa" stroke-width="1.2"/><path d="M7 15 H13" stroke="#f2f6fa" stroke-width="1.2"/></g><g transform="translate(1451,991)"><path d="M0 5 H3 L7.5 0.5 V14.5 L3 10 H0 Z" fill="#f2f6fa"/><circle cx="10.5" cy="11" r="3.6" fill="#e02a2a"/><path d="M8.3 13.2 L12.7 8.8" stroke="#fff" stroke-width="1.2"/></g></svg>
<div class="a t y c" style="left:1480px;top:985px;width:74px;font-size:12.4px;color:#fff;">14:20</div>
<div class="a t y c" style="left:1480px;top:1001.5px;width:74px;font-size:12.4px;color:#fff;">2023-01-11</div>
<div class="a " style="left:1561px;top:981px;width:13px;height:36px;background:linear-gradient(90deg,#6f99be,#4f7da8);border:1px solid #9fbdd6"></div>
<div class="a " style="left:0px;top:1020px;width:1920px;height:9px;background:#1f1f1f;border-top:1px solid #3a3a3a"></div>
</body></html>
